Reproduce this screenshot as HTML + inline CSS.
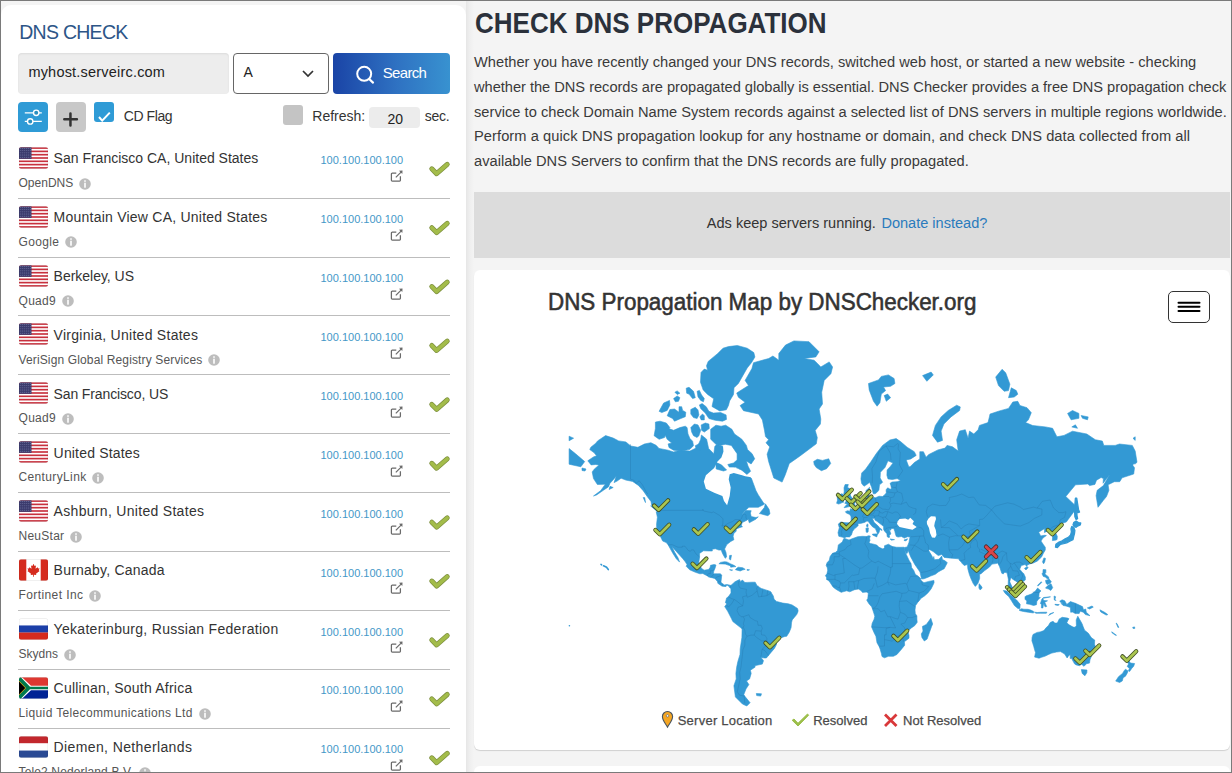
<!DOCTYPE html>
<html><head><meta charset="utf-8">
<style>
*{box-sizing:border-box;margin:0;padding:0}
html,body{width:1232px;height:773px;overflow:hidden;background:#f4f4f4;font-family:"Liberation Sans",sans-serif}
#frame{position:absolute;left:0;top:0;width:1232px;height:773px;border:1px solid #7a7a7a;pointer-events:none;z-index:50}
.abs{position:absolute}
#left{position:absolute;left:1px;top:5px;width:465px;height:780px;background:#fff;border-radius:10px 10px 0 0}
#track{position:absolute;left:466px;top:1px;width:8px;height:772px;background:linear-gradient(90deg,#e6e6e6,#eeeeee 40%,#f4f4f4)}
.t{position:absolute;white-space:nowrap;line-height:1}
</style></head><body>
<div id="frame"></div>
<div id="left"></div>
<div id="track"></div>

<!-- left panel content -->
<div class="t" style="left:19.2px;top:23.2px;font-size:19.5px;letter-spacing:-0.72px;color:#2d5587">DNS CHECK</div>
<div class="abs" style="left:18px;top:53px;width:211px;height:41px;background:#ededed;border-radius:4px;box-shadow:inset 0 1px 2px rgba(0,0,0,.08)"></div>
<div class="t" style="left:28.4px;top:64.5px;font-size:14.5px;letter-spacing:0.2px;color:#222">myhost.serveirc.com</div>
<div class="abs" style="left:233px;top:53px;width:96px;height:41px;border:1px solid #666;border-radius:4px;background:#fff"></div>
<div class="t" style="left:243.5px;top:65.2px;font-size:14px;color:#222">A</div>
<svg class="abs" style="left:301px;top:68px" width="14" height="10" viewBox="0 0 14 10"><path d="M2 3 L7 8 L12 3" fill="none" stroke="#333" stroke-width="1.7"/></svg>
<div class="abs" style="left:333px;top:53px;width:117px;height:41px;border-radius:4px;background:linear-gradient(90deg,#1a44a6,#2f72c2 55%,#3892d0)"></div>
<svg class="abs" style="left:354px;top:63px" width="22" height="22" viewBox="0 0 22 22"><circle cx="10.2" cy="10.8" r="7" fill="none" stroke="#fff" stroke-width="2"/><path d="M15.2 16 L19 19.6" stroke="#fff" stroke-width="2.2" stroke-linecap="round"/></svg>
<div class="t" style="left:382.8px;top:64.6px;font-size:15px;letter-spacing:-0.7px;color:#fff">Search</div>

<div class="abs" style="left:18px;top:102px;width:30px;height:30px;background:#2f9bd6;border-radius:4px"></div>
<svg class="abs" style="left:18px;top:102px" width="30" height="30" viewBox="0 0 30 30"><path d="M6.8 10.8H23.8M6.8 19.4H23.8" stroke="#fff" stroke-width="1.3"/><circle cx="18.2" cy="10.8" r="2.7" fill="#2a8fc0" stroke="#fff" stroke-width="1.4"/><circle cx="12.2" cy="19.4" r="2.7" fill="#2a8fc0" stroke="#fff" stroke-width="1.4"/></svg>
<div class="abs" style="left:56px;top:102px;width:30px;height:30px;background:#c8c8c8;border-radius:4px"></div>
<svg class="abs" style="left:56px;top:102px" width="30" height="30" viewBox="0 0 30 30"><path d="M14.45 11.4V23.5M8.3 17.3H20.9" stroke="#333" stroke-width="2.5" stroke-linecap="round"/></svg>
<div class="abs" style="left:94px;top:102px;width:20px;height:20px;background:#2f9bd6;border-radius:3px"></div>
<svg class="abs" style="left:94px;top:102px" width="20" height="20" viewBox="0 0 20 20"><path d="M5 15 L8.2 18.6 L15.8 10.6" fill="none" stroke="#fff" stroke-width="2"/></svg>
<div class="t" style="left:123.7px;top:108.8px;font-size:14px;letter-spacing:-0.4px;color:#333">CD Flag</div>
<div class="abs" style="left:283px;top:105px;width:20px;height:20px;background:#c4c4c4;border-radius:3px"></div>
<div class="t" style="left:312.3px;top:109.2px;font-size:14px;color:#333">Refresh:</div>
<div class="abs" style="left:369.2px;top:106.5px;width:50.5px;height:21px;background:#ececec;border-radius:4px"></div>
<div class="t" style="left:387.5px;top:111.5px;font-size:14px;color:#222">20</div>
<div class="t" style="left:424.8px;top:109.2px;font-size:14px;letter-spacing:-0.3px;color:#333">sec.</div>

<svg class="abs" style="left:18.5px;top:146.5px" width="29" height="22" viewBox="0 0 29 21.5"><defs><clipPath id="fc146"><rect width="29" height="21.5" rx="2"/></clipPath></defs><g clip-path="url(#fc146)"><rect width="29" height="21.5" fill="#fff"/><rect y="0.00" width="29" height="1.65" fill="#c8313e"/><rect y="3.31" width="29" height="1.65" fill="#c8313e"/><rect y="6.62" width="29" height="1.65" fill="#c8313e"/><rect y="9.92" width="29" height="1.65" fill="#c8313e"/><rect y="13.23" width="29" height="1.65" fill="#c8313e"/><rect y="16.54" width="29" height="1.65" fill="#c8313e"/><rect y="19.85" width="29" height="1.65" fill="#c8313e"/><rect width="12.5" height="11.6" fill="#3b3b6d"/><circle cx="1.2" cy="1.2" r="0.45" fill="#9aa0c8"/><circle cx="3.2" cy="1.2" r="0.45" fill="#9aa0c8"/><circle cx="5.2" cy="1.2" r="0.45" fill="#9aa0c8"/><circle cx="7.2" cy="1.2" r="0.45" fill="#9aa0c8"/><circle cx="9.2" cy="1.2" r="0.45" fill="#9aa0c8"/><circle cx="11.2" cy="1.2" r="0.45" fill="#9aa0c8"/><circle cx="1.2" cy="3.4" r="0.45" fill="#9aa0c8"/><circle cx="3.2" cy="3.4" r="0.45" fill="#9aa0c8"/><circle cx="5.2" cy="3.4" r="0.45" fill="#9aa0c8"/><circle cx="7.2" cy="3.4" r="0.45" fill="#9aa0c8"/><circle cx="9.2" cy="3.4" r="0.45" fill="#9aa0c8"/><circle cx="11.2" cy="3.4" r="0.45" fill="#9aa0c8"/><circle cx="1.2" cy="5.6" r="0.45" fill="#9aa0c8"/><circle cx="3.2" cy="5.6" r="0.45" fill="#9aa0c8"/><circle cx="5.2" cy="5.6" r="0.45" fill="#9aa0c8"/><circle cx="7.2" cy="5.6" r="0.45" fill="#9aa0c8"/><circle cx="9.2" cy="5.6" r="0.45" fill="#9aa0c8"/><circle cx="11.2" cy="5.6" r="0.45" fill="#9aa0c8"/><circle cx="1.2" cy="7.8" r="0.45" fill="#9aa0c8"/><circle cx="3.2" cy="7.8" r="0.45" fill="#9aa0c8"/><circle cx="5.2" cy="7.8" r="0.45" fill="#9aa0c8"/><circle cx="7.2" cy="7.8" r="0.45" fill="#9aa0c8"/><circle cx="9.2" cy="7.8" r="0.45" fill="#9aa0c8"/><circle cx="11.2" cy="7.8" r="0.45" fill="#9aa0c8"/><circle cx="1.2" cy="10.0" r="0.45" fill="#9aa0c8"/><circle cx="3.2" cy="10.0" r="0.45" fill="#9aa0c8"/><circle cx="5.2" cy="10.0" r="0.45" fill="#9aa0c8"/><circle cx="7.2" cy="10.0" r="0.45" fill="#9aa0c8"/><circle cx="9.2" cy="10.0" r="0.45" fill="#9aa0c8"/><circle cx="11.2" cy="10.0" r="0.45" fill="#9aa0c8"/></g><rect x="0.25" y="0.25" width="28.5" height="21" rx="2" fill="none" stroke="rgba(0,0,0,0.12)" stroke-width="0.5"/></svg><div class="t" style="left:53.6px;top:151.0px;font-size:14px;letter-spacing:0.002px;color:#333">San Francisco CA, United States</div><div class="t" style="left:18.5px;top:176.8px;font-size:12px;letter-spacing:0.014px;color:#555">OpenDNS</div><svg class="abs" style="left:78.8px;top:177.5px" width="12" height="12" viewBox="0 0 12 12"><circle cx="6" cy="6" r="5.8" fill="#bdbdbd"/><rect x="5.2" y="2.3" width="1.6" height="1.5" fill="#fff"/><rect x="5.2" y="4.7" width="1.6" height="5" fill="#fff"/></svg><div class="t" style="left:320.5px;top:155.3px;font-size:11px;color:#4598c8">100.100.100.100</div><svg class="abs" style="left:389.5px;top:170.0px" width="14" height="13" viewBox="0 0 14 13"><path d="M6.3 3.1 H2.3 Q1.4 3.1 1.4 4 V10.3 Q1.4 11.1 2.3 11.1 H9.6 Q10.4 11.1 10.4 10.3 V6.3" fill="none" stroke="#6a6a6a" stroke-width="1.25"/><path d="M5.8 7.4 L11.6 1.6" fill="none" stroke="#6a6a6a" stroke-width="1.2"/><path d="M9 0.7 L12.5 0.5 L12.3 4Z" fill="#6a6a6a"/></svg><svg class="abs" style="left:0;top:0;overflow:visible" width="1" height="1"><path d="M431.8 168.8 L436.6 173.7 L447.2 164.4" fill="none" stroke="#7d8f3f" stroke-width="5" stroke-linejoin="round" stroke-linecap="round"/><path d="M431.8 168.8 L436.6 173.7 L447.2 164.4" fill="none" stroke="#a3bc4a" stroke-width="3.6" stroke-linejoin="round" stroke-linecap="round"/></svg><div class="abs" style="left:18px;top:198px;width:432px;height:1px;background:#bdbdbd"></div><svg class="abs" style="left:18.5px;top:205.5px" width="29" height="22" viewBox="0 0 29 21.5"><defs><clipPath id="fc205"><rect width="29" height="21.5" rx="2"/></clipPath></defs><g clip-path="url(#fc205)"><rect width="29" height="21.5" fill="#fff"/><rect y="0.00" width="29" height="1.65" fill="#c8313e"/><rect y="3.31" width="29" height="1.65" fill="#c8313e"/><rect y="6.62" width="29" height="1.65" fill="#c8313e"/><rect y="9.92" width="29" height="1.65" fill="#c8313e"/><rect y="13.23" width="29" height="1.65" fill="#c8313e"/><rect y="16.54" width="29" height="1.65" fill="#c8313e"/><rect y="19.85" width="29" height="1.65" fill="#c8313e"/><rect width="12.5" height="11.6" fill="#3b3b6d"/><circle cx="1.2" cy="1.2" r="0.45" fill="#9aa0c8"/><circle cx="3.2" cy="1.2" r="0.45" fill="#9aa0c8"/><circle cx="5.2" cy="1.2" r="0.45" fill="#9aa0c8"/><circle cx="7.2" cy="1.2" r="0.45" fill="#9aa0c8"/><circle cx="9.2" cy="1.2" r="0.45" fill="#9aa0c8"/><circle cx="11.2" cy="1.2" r="0.45" fill="#9aa0c8"/><circle cx="1.2" cy="3.4" r="0.45" fill="#9aa0c8"/><circle cx="3.2" cy="3.4" r="0.45" fill="#9aa0c8"/><circle cx="5.2" cy="3.4" r="0.45" fill="#9aa0c8"/><circle cx="7.2" cy="3.4" r="0.45" fill="#9aa0c8"/><circle cx="9.2" cy="3.4" r="0.45" fill="#9aa0c8"/><circle cx="11.2" cy="3.4" r="0.45" fill="#9aa0c8"/><circle cx="1.2" cy="5.6" r="0.45" fill="#9aa0c8"/><circle cx="3.2" cy="5.6" r="0.45" fill="#9aa0c8"/><circle cx="5.2" cy="5.6" r="0.45" fill="#9aa0c8"/><circle cx="7.2" cy="5.6" r="0.45" fill="#9aa0c8"/><circle cx="9.2" cy="5.6" r="0.45" fill="#9aa0c8"/><circle cx="11.2" cy="5.6" r="0.45" fill="#9aa0c8"/><circle cx="1.2" cy="7.8" r="0.45" fill="#9aa0c8"/><circle cx="3.2" cy="7.8" r="0.45" fill="#9aa0c8"/><circle cx="5.2" cy="7.8" r="0.45" fill="#9aa0c8"/><circle cx="7.2" cy="7.8" r="0.45" fill="#9aa0c8"/><circle cx="9.2" cy="7.8" r="0.45" fill="#9aa0c8"/><circle cx="11.2" cy="7.8" r="0.45" fill="#9aa0c8"/><circle cx="1.2" cy="10.0" r="0.45" fill="#9aa0c8"/><circle cx="3.2" cy="10.0" r="0.45" fill="#9aa0c8"/><circle cx="5.2" cy="10.0" r="0.45" fill="#9aa0c8"/><circle cx="7.2" cy="10.0" r="0.45" fill="#9aa0c8"/><circle cx="9.2" cy="10.0" r="0.45" fill="#9aa0c8"/><circle cx="11.2" cy="10.0" r="0.45" fill="#9aa0c8"/></g><rect x="0.25" y="0.25" width="28.5" height="21" rx="2" fill="none" stroke="rgba(0,0,0,0.12)" stroke-width="0.5"/></svg><div class="t" style="left:53.6px;top:209.9px;font-size:14px;letter-spacing:0.234px;color:#333">Mountain View CA, United States</div><div class="t" style="left:18.5px;top:235.7px;font-size:12px;letter-spacing:0.367px;color:#555">Google</div><svg class="abs" style="left:64.9px;top:236.4px" width="12" height="12" viewBox="0 0 12 12"><circle cx="6" cy="6" r="5.8" fill="#bdbdbd"/><rect x="5.2" y="2.3" width="1.6" height="1.5" fill="#fff"/><rect x="5.2" y="4.7" width="1.6" height="5" fill="#fff"/></svg><div class="t" style="left:320.5px;top:214.2px;font-size:11px;color:#4598c8">100.100.100.100</div><svg class="abs" style="left:389.5px;top:228.9px" width="14" height="13" viewBox="0 0 14 13"><path d="M6.3 3.1 H2.3 Q1.4 3.1 1.4 4 V10.3 Q1.4 11.1 2.3 11.1 H9.6 Q10.4 11.1 10.4 10.3 V6.3" fill="none" stroke="#6a6a6a" stroke-width="1.25"/><path d="M5.8 7.4 L11.6 1.6" fill="none" stroke="#6a6a6a" stroke-width="1.2"/><path d="M9 0.7 L12.5 0.5 L12.3 4Z" fill="#6a6a6a"/></svg><svg class="abs" style="left:0;top:0;overflow:visible" width="1" height="1"><path d="M431.8 227.7 L436.6 232.6 L447.2 223.3" fill="none" stroke="#7d8f3f" stroke-width="5" stroke-linejoin="round" stroke-linecap="round"/><path d="M431.8 227.7 L436.6 232.6 L447.2 223.3" fill="none" stroke="#a3bc4a" stroke-width="3.6" stroke-linejoin="round" stroke-linecap="round"/></svg><div class="abs" style="left:18px;top:257px;width:432px;height:1px;background:#bdbdbd"></div><svg class="abs" style="left:18.5px;top:264.5px" width="29" height="22" viewBox="0 0 29 21.5"><defs><clipPath id="fc264"><rect width="29" height="21.5" rx="2"/></clipPath></defs><g clip-path="url(#fc264)"><rect width="29" height="21.5" fill="#fff"/><rect y="0.00" width="29" height="1.65" fill="#c8313e"/><rect y="3.31" width="29" height="1.65" fill="#c8313e"/><rect y="6.62" width="29" height="1.65" fill="#c8313e"/><rect y="9.92" width="29" height="1.65" fill="#c8313e"/><rect y="13.23" width="29" height="1.65" fill="#c8313e"/><rect y="16.54" width="29" height="1.65" fill="#c8313e"/><rect y="19.85" width="29" height="1.65" fill="#c8313e"/><rect width="12.5" height="11.6" fill="#3b3b6d"/><circle cx="1.2" cy="1.2" r="0.45" fill="#9aa0c8"/><circle cx="3.2" cy="1.2" r="0.45" fill="#9aa0c8"/><circle cx="5.2" cy="1.2" r="0.45" fill="#9aa0c8"/><circle cx="7.2" cy="1.2" r="0.45" fill="#9aa0c8"/><circle cx="9.2" cy="1.2" r="0.45" fill="#9aa0c8"/><circle cx="11.2" cy="1.2" r="0.45" fill="#9aa0c8"/><circle cx="1.2" cy="3.4" r="0.45" fill="#9aa0c8"/><circle cx="3.2" cy="3.4" r="0.45" fill="#9aa0c8"/><circle cx="5.2" cy="3.4" r="0.45" fill="#9aa0c8"/><circle cx="7.2" cy="3.4" r="0.45" fill="#9aa0c8"/><circle cx="9.2" cy="3.4" r="0.45" fill="#9aa0c8"/><circle cx="11.2" cy="3.4" r="0.45" fill="#9aa0c8"/><circle cx="1.2" cy="5.6" r="0.45" fill="#9aa0c8"/><circle cx="3.2" cy="5.6" r="0.45" fill="#9aa0c8"/><circle cx="5.2" cy="5.6" r="0.45" fill="#9aa0c8"/><circle cx="7.2" cy="5.6" r="0.45" fill="#9aa0c8"/><circle cx="9.2" cy="5.6" r="0.45" fill="#9aa0c8"/><circle cx="11.2" cy="5.6" r="0.45" fill="#9aa0c8"/><circle cx="1.2" cy="7.8" r="0.45" fill="#9aa0c8"/><circle cx="3.2" cy="7.8" r="0.45" fill="#9aa0c8"/><circle cx="5.2" cy="7.8" r="0.45" fill="#9aa0c8"/><circle cx="7.2" cy="7.8" r="0.45" fill="#9aa0c8"/><circle cx="9.2" cy="7.8" r="0.45" fill="#9aa0c8"/><circle cx="11.2" cy="7.8" r="0.45" fill="#9aa0c8"/><circle cx="1.2" cy="10.0" r="0.45" fill="#9aa0c8"/><circle cx="3.2" cy="10.0" r="0.45" fill="#9aa0c8"/><circle cx="5.2" cy="10.0" r="0.45" fill="#9aa0c8"/><circle cx="7.2" cy="10.0" r="0.45" fill="#9aa0c8"/><circle cx="9.2" cy="10.0" r="0.45" fill="#9aa0c8"/><circle cx="11.2" cy="10.0" r="0.45" fill="#9aa0c8"/></g><rect x="0.25" y="0.25" width="28.5" height="21" rx="2" fill="none" stroke="rgba(0,0,0,0.12)" stroke-width="0.5"/></svg><div class="t" style="left:53.6px;top:268.8px;font-size:14px;letter-spacing:-0.022px;color:#333">Berkeley, US</div><div class="t" style="left:18.5px;top:294.6px;font-size:12px;letter-spacing:0.300px;color:#555">Quad9</div><svg class="abs" style="left:61.5px;top:295.3px" width="12" height="12" viewBox="0 0 12 12"><circle cx="6" cy="6" r="5.8" fill="#bdbdbd"/><rect x="5.2" y="2.3" width="1.6" height="1.5" fill="#fff"/><rect x="5.2" y="4.7" width="1.6" height="5" fill="#fff"/></svg><div class="t" style="left:320.5px;top:273.1px;font-size:11px;color:#4598c8">100.100.100.100</div><svg class="abs" style="left:389.5px;top:287.8px" width="14" height="13" viewBox="0 0 14 13"><path d="M6.3 3.1 H2.3 Q1.4 3.1 1.4 4 V10.3 Q1.4 11.1 2.3 11.1 H9.6 Q10.4 11.1 10.4 10.3 V6.3" fill="none" stroke="#6a6a6a" stroke-width="1.25"/><path d="M5.8 7.4 L11.6 1.6" fill="none" stroke="#6a6a6a" stroke-width="1.2"/><path d="M9 0.7 L12.5 0.5 L12.3 4Z" fill="#6a6a6a"/></svg><svg class="abs" style="left:0;top:0;overflow:visible" width="1" height="1"><path d="M431.8 286.6 L436.6 291.5 L447.2 282.2" fill="none" stroke="#7d8f3f" stroke-width="5" stroke-linejoin="round" stroke-linecap="round"/><path d="M431.8 286.6 L436.6 291.5 L447.2 282.2" fill="none" stroke="#a3bc4a" stroke-width="3.6" stroke-linejoin="round" stroke-linecap="round"/></svg><div class="abs" style="left:18px;top:315px;width:432px;height:1px;background:#bdbdbd"></div><svg class="abs" style="left:18.5px;top:323.0px" width="29" height="22" viewBox="0 0 29 21.5"><defs><clipPath id="fc323"><rect width="29" height="21.5" rx="2"/></clipPath></defs><g clip-path="url(#fc323)"><rect width="29" height="21.5" fill="#fff"/><rect y="0.00" width="29" height="1.65" fill="#c8313e"/><rect y="3.31" width="29" height="1.65" fill="#c8313e"/><rect y="6.62" width="29" height="1.65" fill="#c8313e"/><rect y="9.92" width="29" height="1.65" fill="#c8313e"/><rect y="13.23" width="29" height="1.65" fill="#c8313e"/><rect y="16.54" width="29" height="1.65" fill="#c8313e"/><rect y="19.85" width="29" height="1.65" fill="#c8313e"/><rect width="12.5" height="11.6" fill="#3b3b6d"/><circle cx="1.2" cy="1.2" r="0.45" fill="#9aa0c8"/><circle cx="3.2" cy="1.2" r="0.45" fill="#9aa0c8"/><circle cx="5.2" cy="1.2" r="0.45" fill="#9aa0c8"/><circle cx="7.2" cy="1.2" r="0.45" fill="#9aa0c8"/><circle cx="9.2" cy="1.2" r="0.45" fill="#9aa0c8"/><circle cx="11.2" cy="1.2" r="0.45" fill="#9aa0c8"/><circle cx="1.2" cy="3.4" r="0.45" fill="#9aa0c8"/><circle cx="3.2" cy="3.4" r="0.45" fill="#9aa0c8"/><circle cx="5.2" cy="3.4" r="0.45" fill="#9aa0c8"/><circle cx="7.2" cy="3.4" r="0.45" fill="#9aa0c8"/><circle cx="9.2" cy="3.4" r="0.45" fill="#9aa0c8"/><circle cx="11.2" cy="3.4" r="0.45" fill="#9aa0c8"/><circle cx="1.2" cy="5.6" r="0.45" fill="#9aa0c8"/><circle cx="3.2" cy="5.6" r="0.45" fill="#9aa0c8"/><circle cx="5.2" cy="5.6" r="0.45" fill="#9aa0c8"/><circle cx="7.2" cy="5.6" r="0.45" fill="#9aa0c8"/><circle cx="9.2" cy="5.6" r="0.45" fill="#9aa0c8"/><circle cx="11.2" cy="5.6" r="0.45" fill="#9aa0c8"/><circle cx="1.2" cy="7.8" r="0.45" fill="#9aa0c8"/><circle cx="3.2" cy="7.8" r="0.45" fill="#9aa0c8"/><circle cx="5.2" cy="7.8" r="0.45" fill="#9aa0c8"/><circle cx="7.2" cy="7.8" r="0.45" fill="#9aa0c8"/><circle cx="9.2" cy="7.8" r="0.45" fill="#9aa0c8"/><circle cx="11.2" cy="7.8" r="0.45" fill="#9aa0c8"/><circle cx="1.2" cy="10.0" r="0.45" fill="#9aa0c8"/><circle cx="3.2" cy="10.0" r="0.45" fill="#9aa0c8"/><circle cx="5.2" cy="10.0" r="0.45" fill="#9aa0c8"/><circle cx="7.2" cy="10.0" r="0.45" fill="#9aa0c8"/><circle cx="9.2" cy="10.0" r="0.45" fill="#9aa0c8"/><circle cx="11.2" cy="10.0" r="0.45" fill="#9aa0c8"/></g><rect x="0.25" y="0.25" width="28.5" height="21" rx="2" fill="none" stroke="rgba(0,0,0,0.12)" stroke-width="0.5"/></svg><div class="t" style="left:53.6px;top:327.7px;font-size:14px;letter-spacing:0.276px;color:#333">Virginia, United States</div><div class="t" style="left:18.5px;top:353.5px;font-size:12px;letter-spacing:0.136px;color:#555">VeriSign Global Registry Services</div><svg class="abs" style="left:207.9px;top:354.2px" width="12" height="12" viewBox="0 0 12 12"><circle cx="6" cy="6" r="5.8" fill="#bdbdbd"/><rect x="5.2" y="2.3" width="1.6" height="1.5" fill="#fff"/><rect x="5.2" y="4.7" width="1.6" height="5" fill="#fff"/></svg><div class="t" style="left:320.5px;top:332.0px;font-size:11px;color:#4598c8">100.100.100.100</div><svg class="abs" style="left:389.5px;top:346.7px" width="14" height="13" viewBox="0 0 14 13"><path d="M6.3 3.1 H2.3 Q1.4 3.1 1.4 4 V10.3 Q1.4 11.1 2.3 11.1 H9.6 Q10.4 11.1 10.4 10.3 V6.3" fill="none" stroke="#6a6a6a" stroke-width="1.25"/><path d="M5.8 7.4 L11.6 1.6" fill="none" stroke="#6a6a6a" stroke-width="1.2"/><path d="M9 0.7 L12.5 0.5 L12.3 4Z" fill="#6a6a6a"/></svg><svg class="abs" style="left:0;top:0;overflow:visible" width="1" height="1"><path d="M431.8 345.5 L436.6 350.4 L447.2 341.1" fill="none" stroke="#7d8f3f" stroke-width="5" stroke-linejoin="round" stroke-linecap="round"/><path d="M431.8 345.5 L436.6 350.4 L447.2 341.1" fill="none" stroke="#a3bc4a" stroke-width="3.6" stroke-linejoin="round" stroke-linecap="round"/></svg><div class="abs" style="left:18px;top:374px;width:432px;height:1px;background:#bdbdbd"></div><svg class="abs" style="left:18.5px;top:382.0px" width="29" height="22" viewBox="0 0 29 21.5"><defs><clipPath id="fc382"><rect width="29" height="21.5" rx="2"/></clipPath></defs><g clip-path="url(#fc382)"><rect width="29" height="21.5" fill="#fff"/><rect y="0.00" width="29" height="1.65" fill="#c8313e"/><rect y="3.31" width="29" height="1.65" fill="#c8313e"/><rect y="6.62" width="29" height="1.65" fill="#c8313e"/><rect y="9.92" width="29" height="1.65" fill="#c8313e"/><rect y="13.23" width="29" height="1.65" fill="#c8313e"/><rect y="16.54" width="29" height="1.65" fill="#c8313e"/><rect y="19.85" width="29" height="1.65" fill="#c8313e"/><rect width="12.5" height="11.6" fill="#3b3b6d"/><circle cx="1.2" cy="1.2" r="0.45" fill="#9aa0c8"/><circle cx="3.2" cy="1.2" r="0.45" fill="#9aa0c8"/><circle cx="5.2" cy="1.2" r="0.45" fill="#9aa0c8"/><circle cx="7.2" cy="1.2" r="0.45" fill="#9aa0c8"/><circle cx="9.2" cy="1.2" r="0.45" fill="#9aa0c8"/><circle cx="11.2" cy="1.2" r="0.45" fill="#9aa0c8"/><circle cx="1.2" cy="3.4" r="0.45" fill="#9aa0c8"/><circle cx="3.2" cy="3.4" r="0.45" fill="#9aa0c8"/><circle cx="5.2" cy="3.4" r="0.45" fill="#9aa0c8"/><circle cx="7.2" cy="3.4" r="0.45" fill="#9aa0c8"/><circle cx="9.2" cy="3.4" r="0.45" fill="#9aa0c8"/><circle cx="11.2" cy="3.4" r="0.45" fill="#9aa0c8"/><circle cx="1.2" cy="5.6" r="0.45" fill="#9aa0c8"/><circle cx="3.2" cy="5.6" r="0.45" fill="#9aa0c8"/><circle cx="5.2" cy="5.6" r="0.45" fill="#9aa0c8"/><circle cx="7.2" cy="5.6" r="0.45" fill="#9aa0c8"/><circle cx="9.2" cy="5.6" r="0.45" fill="#9aa0c8"/><circle cx="11.2" cy="5.6" r="0.45" fill="#9aa0c8"/><circle cx="1.2" cy="7.8" r="0.45" fill="#9aa0c8"/><circle cx="3.2" cy="7.8" r="0.45" fill="#9aa0c8"/><circle cx="5.2" cy="7.8" r="0.45" fill="#9aa0c8"/><circle cx="7.2" cy="7.8" r="0.45" fill="#9aa0c8"/><circle cx="9.2" cy="7.8" r="0.45" fill="#9aa0c8"/><circle cx="11.2" cy="7.8" r="0.45" fill="#9aa0c8"/><circle cx="1.2" cy="10.0" r="0.45" fill="#9aa0c8"/><circle cx="3.2" cy="10.0" r="0.45" fill="#9aa0c8"/><circle cx="5.2" cy="10.0" r="0.45" fill="#9aa0c8"/><circle cx="7.2" cy="10.0" r="0.45" fill="#9aa0c8"/><circle cx="9.2" cy="10.0" r="0.45" fill="#9aa0c8"/><circle cx="11.2" cy="10.0" r="0.45" fill="#9aa0c8"/></g><rect x="0.25" y="0.25" width="28.5" height="21" rx="2" fill="none" stroke="rgba(0,0,0,0.12)" stroke-width="0.5"/></svg><div class="t" style="left:53.6px;top:386.6px;font-size:14px;letter-spacing:-0.130px;color:#333">San Francisco, US</div><div class="t" style="left:18.5px;top:412.4px;font-size:12px;letter-spacing:0.300px;color:#555">Quad9</div><svg class="abs" style="left:61.5px;top:413.1px" width="12" height="12" viewBox="0 0 12 12"><circle cx="6" cy="6" r="5.8" fill="#bdbdbd"/><rect x="5.2" y="2.3" width="1.6" height="1.5" fill="#fff"/><rect x="5.2" y="4.7" width="1.6" height="5" fill="#fff"/></svg><div class="t" style="left:320.5px;top:390.9px;font-size:11px;color:#4598c8">100.100.100.100</div><svg class="abs" style="left:389.5px;top:405.6px" width="14" height="13" viewBox="0 0 14 13"><path d="M6.3 3.1 H2.3 Q1.4 3.1 1.4 4 V10.3 Q1.4 11.1 2.3 11.1 H9.6 Q10.4 11.1 10.4 10.3 V6.3" fill="none" stroke="#6a6a6a" stroke-width="1.25"/><path d="M5.8 7.4 L11.6 1.6" fill="none" stroke="#6a6a6a" stroke-width="1.2"/><path d="M9 0.7 L12.5 0.5 L12.3 4Z" fill="#6a6a6a"/></svg><svg class="abs" style="left:0;top:0;overflow:visible" width="1" height="1"><path d="M431.8 404.4 L436.6 409.3 L447.2 400.0" fill="none" stroke="#7d8f3f" stroke-width="5" stroke-linejoin="round" stroke-linecap="round"/><path d="M431.8 404.4 L436.6 409.3 L447.2 400.0" fill="none" stroke="#a3bc4a" stroke-width="3.6" stroke-linejoin="round" stroke-linecap="round"/></svg><div class="abs" style="left:18px;top:433px;width:432px;height:1px;background:#bdbdbd"></div><svg class="abs" style="left:18.5px;top:441.0px" width="29" height="22" viewBox="0 0 29 21.5"><defs><clipPath id="fc441"><rect width="29" height="21.5" rx="2"/></clipPath></defs><g clip-path="url(#fc441)"><rect width="29" height="21.5" fill="#fff"/><rect y="0.00" width="29" height="1.65" fill="#c8313e"/><rect y="3.31" width="29" height="1.65" fill="#c8313e"/><rect y="6.62" width="29" height="1.65" fill="#c8313e"/><rect y="9.92" width="29" height="1.65" fill="#c8313e"/><rect y="13.23" width="29" height="1.65" fill="#c8313e"/><rect y="16.54" width="29" height="1.65" fill="#c8313e"/><rect y="19.85" width="29" height="1.65" fill="#c8313e"/><rect width="12.5" height="11.6" fill="#3b3b6d"/><circle cx="1.2" cy="1.2" r="0.45" fill="#9aa0c8"/><circle cx="3.2" cy="1.2" r="0.45" fill="#9aa0c8"/><circle cx="5.2" cy="1.2" r="0.45" fill="#9aa0c8"/><circle cx="7.2" cy="1.2" r="0.45" fill="#9aa0c8"/><circle cx="9.2" cy="1.2" r="0.45" fill="#9aa0c8"/><circle cx="11.2" cy="1.2" r="0.45" fill="#9aa0c8"/><circle cx="1.2" cy="3.4" r="0.45" fill="#9aa0c8"/><circle cx="3.2" cy="3.4" r="0.45" fill="#9aa0c8"/><circle cx="5.2" cy="3.4" r="0.45" fill="#9aa0c8"/><circle cx="7.2" cy="3.4" r="0.45" fill="#9aa0c8"/><circle cx="9.2" cy="3.4" r="0.45" fill="#9aa0c8"/><circle cx="11.2" cy="3.4" r="0.45" fill="#9aa0c8"/><circle cx="1.2" cy="5.6" r="0.45" fill="#9aa0c8"/><circle cx="3.2" cy="5.6" r="0.45" fill="#9aa0c8"/><circle cx="5.2" cy="5.6" r="0.45" fill="#9aa0c8"/><circle cx="7.2" cy="5.6" r="0.45" fill="#9aa0c8"/><circle cx="9.2" cy="5.6" r="0.45" fill="#9aa0c8"/><circle cx="11.2" cy="5.6" r="0.45" fill="#9aa0c8"/><circle cx="1.2" cy="7.8" r="0.45" fill="#9aa0c8"/><circle cx="3.2" cy="7.8" r="0.45" fill="#9aa0c8"/><circle cx="5.2" cy="7.8" r="0.45" fill="#9aa0c8"/><circle cx="7.2" cy="7.8" r="0.45" fill="#9aa0c8"/><circle cx="9.2" cy="7.8" r="0.45" fill="#9aa0c8"/><circle cx="11.2" cy="7.8" r="0.45" fill="#9aa0c8"/><circle cx="1.2" cy="10.0" r="0.45" fill="#9aa0c8"/><circle cx="3.2" cy="10.0" r="0.45" fill="#9aa0c8"/><circle cx="5.2" cy="10.0" r="0.45" fill="#9aa0c8"/><circle cx="7.2" cy="10.0" r="0.45" fill="#9aa0c8"/><circle cx="9.2" cy="10.0" r="0.45" fill="#9aa0c8"/><circle cx="11.2" cy="10.0" r="0.45" fill="#9aa0c8"/></g><rect x="0.25" y="0.25" width="28.5" height="21" rx="2" fill="none" stroke="rgba(0,0,0,0.12)" stroke-width="0.5"/></svg><div class="t" style="left:53.6px;top:445.5px;font-size:14px;letter-spacing:0.173px;color:#333">United States</div><div class="t" style="left:18.5px;top:471.3px;font-size:12px;letter-spacing:0.364px;color:#555">CenturyLink</div><svg class="abs" style="left:92.0px;top:472.0px" width="12" height="12" viewBox="0 0 12 12"><circle cx="6" cy="6" r="5.8" fill="#bdbdbd"/><rect x="5.2" y="2.3" width="1.6" height="1.5" fill="#fff"/><rect x="5.2" y="4.7" width="1.6" height="5" fill="#fff"/></svg><div class="t" style="left:320.5px;top:449.8px;font-size:11px;color:#4598c8">100.100.100.100</div><svg class="abs" style="left:389.5px;top:464.5px" width="14" height="13" viewBox="0 0 14 13"><path d="M6.3 3.1 H2.3 Q1.4 3.1 1.4 4 V10.3 Q1.4 11.1 2.3 11.1 H9.6 Q10.4 11.1 10.4 10.3 V6.3" fill="none" stroke="#6a6a6a" stroke-width="1.25"/><path d="M5.8 7.4 L11.6 1.6" fill="none" stroke="#6a6a6a" stroke-width="1.2"/><path d="M9 0.7 L12.5 0.5 L12.3 4Z" fill="#6a6a6a"/></svg><svg class="abs" style="left:0;top:0;overflow:visible" width="1" height="1"><path d="M431.8 463.3 L436.6 468.2 L447.2 458.9" fill="none" stroke="#7d8f3f" stroke-width="5" stroke-linejoin="round" stroke-linecap="round"/><path d="M431.8 463.3 L436.6 468.2 L447.2 458.9" fill="none" stroke="#a3bc4a" stroke-width="3.6" stroke-linejoin="round" stroke-linecap="round"/></svg><div class="abs" style="left:18px;top:492px;width:432px;height:1px;background:#bdbdbd"></div><svg class="abs" style="left:18.5px;top:500.0px" width="29" height="22" viewBox="0 0 29 21.5"><defs><clipPath id="fc500"><rect width="29" height="21.5" rx="2"/></clipPath></defs><g clip-path="url(#fc500)"><rect width="29" height="21.5" fill="#fff"/><rect y="0.00" width="29" height="1.65" fill="#c8313e"/><rect y="3.31" width="29" height="1.65" fill="#c8313e"/><rect y="6.62" width="29" height="1.65" fill="#c8313e"/><rect y="9.92" width="29" height="1.65" fill="#c8313e"/><rect y="13.23" width="29" height="1.65" fill="#c8313e"/><rect y="16.54" width="29" height="1.65" fill="#c8313e"/><rect y="19.85" width="29" height="1.65" fill="#c8313e"/><rect width="12.5" height="11.6" fill="#3b3b6d"/><circle cx="1.2" cy="1.2" r="0.45" fill="#9aa0c8"/><circle cx="3.2" cy="1.2" r="0.45" fill="#9aa0c8"/><circle cx="5.2" cy="1.2" r="0.45" fill="#9aa0c8"/><circle cx="7.2" cy="1.2" r="0.45" fill="#9aa0c8"/><circle cx="9.2" cy="1.2" r="0.45" fill="#9aa0c8"/><circle cx="11.2" cy="1.2" r="0.45" fill="#9aa0c8"/><circle cx="1.2" cy="3.4" r="0.45" fill="#9aa0c8"/><circle cx="3.2" cy="3.4" r="0.45" fill="#9aa0c8"/><circle cx="5.2" cy="3.4" r="0.45" fill="#9aa0c8"/><circle cx="7.2" cy="3.4" r="0.45" fill="#9aa0c8"/><circle cx="9.2" cy="3.4" r="0.45" fill="#9aa0c8"/><circle cx="11.2" cy="3.4" r="0.45" fill="#9aa0c8"/><circle cx="1.2" cy="5.6" r="0.45" fill="#9aa0c8"/><circle cx="3.2" cy="5.6" r="0.45" fill="#9aa0c8"/><circle cx="5.2" cy="5.6" r="0.45" fill="#9aa0c8"/><circle cx="7.2" cy="5.6" r="0.45" fill="#9aa0c8"/><circle cx="9.2" cy="5.6" r="0.45" fill="#9aa0c8"/><circle cx="11.2" cy="5.6" r="0.45" fill="#9aa0c8"/><circle cx="1.2" cy="7.8" r="0.45" fill="#9aa0c8"/><circle cx="3.2" cy="7.8" r="0.45" fill="#9aa0c8"/><circle cx="5.2" cy="7.8" r="0.45" fill="#9aa0c8"/><circle cx="7.2" cy="7.8" r="0.45" fill="#9aa0c8"/><circle cx="9.2" cy="7.8" r="0.45" fill="#9aa0c8"/><circle cx="11.2" cy="7.8" r="0.45" fill="#9aa0c8"/><circle cx="1.2" cy="10.0" r="0.45" fill="#9aa0c8"/><circle cx="3.2" cy="10.0" r="0.45" fill="#9aa0c8"/><circle cx="5.2" cy="10.0" r="0.45" fill="#9aa0c8"/><circle cx="7.2" cy="10.0" r="0.45" fill="#9aa0c8"/><circle cx="9.2" cy="10.0" r="0.45" fill="#9aa0c8"/><circle cx="11.2" cy="10.0" r="0.45" fill="#9aa0c8"/></g><rect x="0.25" y="0.25" width="28.5" height="21" rx="2" fill="none" stroke="rgba(0,0,0,0.12)" stroke-width="0.5"/></svg><div class="t" style="left:53.6px;top:504.4px;font-size:14px;letter-spacing:0.306px;color:#333">Ashburn, United States</div><div class="t" style="left:18.5px;top:530.2px;font-size:12px;letter-spacing:0.257px;color:#555">NeuStar</div><svg class="abs" style="left:69.8px;top:530.9px" width="12" height="12" viewBox="0 0 12 12"><circle cx="6" cy="6" r="5.8" fill="#bdbdbd"/><rect x="5.2" y="2.3" width="1.6" height="1.5" fill="#fff"/><rect x="5.2" y="4.7" width="1.6" height="5" fill="#fff"/></svg><div class="t" style="left:320.5px;top:508.7px;font-size:11px;color:#4598c8">100.100.100.100</div><svg class="abs" style="left:389.5px;top:523.4px" width="14" height="13" viewBox="0 0 14 13"><path d="M6.3 3.1 H2.3 Q1.4 3.1 1.4 4 V10.3 Q1.4 11.1 2.3 11.1 H9.6 Q10.4 11.1 10.4 10.3 V6.3" fill="none" stroke="#6a6a6a" stroke-width="1.25"/><path d="M5.8 7.4 L11.6 1.6" fill="none" stroke="#6a6a6a" stroke-width="1.2"/><path d="M9 0.7 L12.5 0.5 L12.3 4Z" fill="#6a6a6a"/></svg><svg class="abs" style="left:0;top:0;overflow:visible" width="1" height="1"><path d="M431.8 522.2 L436.6 527.1 L447.2 517.8" fill="none" stroke="#7d8f3f" stroke-width="5" stroke-linejoin="round" stroke-linecap="round"/><path d="M431.8 522.2 L436.6 527.1 L447.2 517.8" fill="none" stroke="#a3bc4a" stroke-width="3.6" stroke-linejoin="round" stroke-linecap="round"/></svg><div class="abs" style="left:18px;top:551px;width:432px;height:1px;background:#bdbdbd"></div><svg class="abs" style="left:18.5px;top:559.0px" width="29" height="22" viewBox="0 0 29 21.5"><defs><clipPath id="fc559"><rect width="29" height="21.5" rx="2"/></clipPath></defs><g clip-path="url(#fc559)"><rect width="29" height="21.5" fill="#fff"/><rect width="7.3" height="21.5" fill="#d52b1e"/><rect x="21.7" width="7.3" height="21.5" fill="#d52b1e"/><path d="M14.5 4.5 L15.6 6.8 L17 6.2 L16.5 9.5 L18.6 8 L19.2 9.2 L20.5 9 L19.8 11.2 L20.6 11.8 L17 14.5 L17.3 15.8 L14.9 15.5 L14.9 17.5 L14.1 17.5 L14.1 15.5 L11.7 15.8 L12 14.5 L8.4 11.8 L9.2 11.2 L8.5 9 L9.8 9.2 L10.4 8 L12.5 9.5 L12 6.2 L13.4 6.8Z" fill="#d52b1e"/></g><rect x="0.25" y="0.25" width="28.5" height="21" rx="2" fill="none" stroke="rgba(0,0,0,0.12)" stroke-width="0.5"/></svg><div class="t" style="left:53.6px;top:563.3px;font-size:14px;letter-spacing:0.218px;color:#333">Burnaby, Canada</div><div class="t" style="left:18.5px;top:589.1px;font-size:12px;letter-spacing:0.408px;color:#555">Fortinet Inc</div><svg class="abs" style="left:88.9px;top:589.8px" width="12" height="12" viewBox="0 0 12 12"><circle cx="6" cy="6" r="5.8" fill="#bdbdbd"/><rect x="5.2" y="2.3" width="1.6" height="1.5" fill="#fff"/><rect x="5.2" y="4.7" width="1.6" height="5" fill="#fff"/></svg><div class="t" style="left:320.5px;top:567.6px;font-size:11px;color:#4598c8">100.100.100.100</div><svg class="abs" style="left:389.5px;top:582.3px" width="14" height="13" viewBox="0 0 14 13"><path d="M6.3 3.1 H2.3 Q1.4 3.1 1.4 4 V10.3 Q1.4 11.1 2.3 11.1 H9.6 Q10.4 11.1 10.4 10.3 V6.3" fill="none" stroke="#6a6a6a" stroke-width="1.25"/><path d="M5.8 7.4 L11.6 1.6" fill="none" stroke="#6a6a6a" stroke-width="1.2"/><path d="M9 0.7 L12.5 0.5 L12.3 4Z" fill="#6a6a6a"/></svg><svg class="abs" style="left:0;top:0;overflow:visible" width="1" height="1"><path d="M431.8 581.1 L436.6 586.0 L447.2 576.7" fill="none" stroke="#7d8f3f" stroke-width="5" stroke-linejoin="round" stroke-linecap="round"/><path d="M431.8 581.1 L436.6 586.0 L447.2 576.7" fill="none" stroke="#a3bc4a" stroke-width="3.6" stroke-linejoin="round" stroke-linecap="round"/></svg><div class="abs" style="left:18px;top:610px;width:432px;height:1px;background:#bdbdbd"></div><svg class="abs" style="left:18.5px;top:617.5px" width="29" height="22" viewBox="0 0 29 21.5"><defs><clipPath id="fc617"><rect width="29" height="21.5" rx="2"/></clipPath></defs><g clip-path="url(#fc617)"><rect width="29" height="7.2" fill="#fff"/><rect y="7.2" width="29" height="7.2" fill="#1c3fa8"/><rect y="14.3" width="29" height="7.2" fill="#d52b1e"/></g><rect x="0.25" y="0.25" width="28.5" height="21" rx="2" fill="none" stroke="rgba(0,0,0,0.12)" stroke-width="0.5"/></svg><div class="t" style="left:53.6px;top:622.2px;font-size:14px;letter-spacing:0.298px;color:#333">Yekaterinburg, Russian Federation</div><div class="t" style="left:18.5px;top:648.0px;font-size:12px;letter-spacing:0.017px;color:#555">Skydns</div><svg class="abs" style="left:63.5px;top:648.7px" width="12" height="12" viewBox="0 0 12 12"><circle cx="6" cy="6" r="5.8" fill="#bdbdbd"/><rect x="5.2" y="2.3" width="1.6" height="1.5" fill="#fff"/><rect x="5.2" y="4.7" width="1.6" height="5" fill="#fff"/></svg><div class="t" style="left:320.5px;top:626.5px;font-size:11px;color:#4598c8">100.100.100.100</div><svg class="abs" style="left:389.5px;top:641.2px" width="14" height="13" viewBox="0 0 14 13"><path d="M6.3 3.1 H2.3 Q1.4 3.1 1.4 4 V10.3 Q1.4 11.1 2.3 11.1 H9.6 Q10.4 11.1 10.4 10.3 V6.3" fill="none" stroke="#6a6a6a" stroke-width="1.25"/><path d="M5.8 7.4 L11.6 1.6" fill="none" stroke="#6a6a6a" stroke-width="1.2"/><path d="M9 0.7 L12.5 0.5 L12.3 4Z" fill="#6a6a6a"/></svg><svg class="abs" style="left:0;top:0;overflow:visible" width="1" height="1"><path d="M431.8 640.0 L436.6 644.9 L447.2 635.6" fill="none" stroke="#7d8f3f" stroke-width="5" stroke-linejoin="round" stroke-linecap="round"/><path d="M431.8 640.0 L436.6 644.9 L447.2 635.6" fill="none" stroke="#a3bc4a" stroke-width="3.6" stroke-linejoin="round" stroke-linecap="round"/></svg><div class="abs" style="left:18px;top:669px;width:432px;height:1px;background:#bdbdbd"></div><svg class="abs" style="left:18.5px;top:676.5px" width="29" height="22" viewBox="0 0 29 21.5"><defs><clipPath id="fc676"><rect width="29" height="21.5" rx="2"/></clipPath></defs><g clip-path="url(#fc676)"><rect width="29" height="10.75" fill="#de3831"/><rect y="10.75" width="29" height="10.75" fill="#002395"/><path d="M0 0 L10 10.75 L0 21.5Z" fill="#fff"/><path d="M0 2.2 L8.2 10.75 L0 19.3Z" fill="#ffb612"/><path d="M0 0 L3 0 L12 8.6 L29 8.6 L29 12.9 L12 12.9 L3 21.5 L0 21.5 L0 19.3 L8.2 10.75 L0 2.2Z" fill="#fff"/><path d="M0 0 L1.8 0 L11 9.6 L29 9.6 L29 11.9 L11 11.9 L1.8 21.5 L0 21.5 L0 18 L7 10.75 L0 3.5Z" fill="#007a4d"/><path d="M0 4.2 L6.3 10.75 L0 17.3Z" fill="#000"/></g><rect x="0.25" y="0.25" width="28.5" height="21" rx="2" fill="none" stroke="rgba(0,0,0,0.12)" stroke-width="0.5"/></svg><div class="t" style="left:53.6px;top:681.1px;font-size:14px;letter-spacing:0.226px;color:#333">Cullinan, South Africa</div><div class="t" style="left:18.5px;top:706.9px;font-size:12px;letter-spacing:0.359px;color:#555">Liquid Telecommunications Ltd</div><svg class="abs" style="left:198.5px;top:707.6px" width="12" height="12" viewBox="0 0 12 12"><circle cx="6" cy="6" r="5.8" fill="#bdbdbd"/><rect x="5.2" y="2.3" width="1.6" height="1.5" fill="#fff"/><rect x="5.2" y="4.7" width="1.6" height="5" fill="#fff"/></svg><div class="t" style="left:320.5px;top:685.4px;font-size:11px;color:#4598c8">100.100.100.100</div><svg class="abs" style="left:389.5px;top:700.1px" width="14" height="13" viewBox="0 0 14 13"><path d="M6.3 3.1 H2.3 Q1.4 3.1 1.4 4 V10.3 Q1.4 11.1 2.3 11.1 H9.6 Q10.4 11.1 10.4 10.3 V6.3" fill="none" stroke="#6a6a6a" stroke-width="1.25"/><path d="M5.8 7.4 L11.6 1.6" fill="none" stroke="#6a6a6a" stroke-width="1.2"/><path d="M9 0.7 L12.5 0.5 L12.3 4Z" fill="#6a6a6a"/></svg><svg class="abs" style="left:0;top:0;overflow:visible" width="1" height="1"><path d="M431.8 698.9 L436.6 703.8 L447.2 694.5" fill="none" stroke="#7d8f3f" stroke-width="5" stroke-linejoin="round" stroke-linecap="round"/><path d="M431.8 698.9 L436.6 703.8 L447.2 694.5" fill="none" stroke="#a3bc4a" stroke-width="3.6" stroke-linejoin="round" stroke-linecap="round"/></svg><div class="abs" style="left:18px;top:728px;width:432px;height:1px;background:#bdbdbd"></div><svg class="abs" style="left:18.5px;top:735.5px" width="29" height="22" viewBox="0 0 29 21.5"><defs><clipPath id="fc735"><rect width="29" height="21.5" rx="2"/></clipPath></defs><g clip-path="url(#fc735)"><rect width="29" height="7.2" fill="#c2272d"/><rect y="7.2" width="29" height="7.2" fill="#fff"/><rect y="14.3" width="29" height="7.2" fill="#2a4a94"/></g><rect x="0.25" y="0.25" width="28.5" height="21" rx="2" fill="none" stroke="rgba(0,0,0,0.12)" stroke-width="0.5"/></svg><div class="t" style="left:53.6px;top:740.0px;font-size:14px;letter-spacing:0.378px;color:#333">Diemen, Netherlands</div><div class="t" style="left:18.5px;top:765.8px;font-size:12px;letter-spacing:0.135px;color:#555">Tele2 Nederland B.V.</div><svg class="abs" style="left:139.0px;top:766.5px" width="12" height="12" viewBox="0 0 12 12"><circle cx="6" cy="6" r="5.8" fill="#bdbdbd"/><rect x="5.2" y="2.3" width="1.6" height="1.5" fill="#fff"/><rect x="5.2" y="4.7" width="1.6" height="5" fill="#fff"/></svg><div class="t" style="left:320.5px;top:744.3px;font-size:11px;color:#4598c8">100.100.100.100</div><svg class="abs" style="left:389.5px;top:759.0px" width="14" height="13" viewBox="0 0 14 13"><path d="M6.3 3.1 H2.3 Q1.4 3.1 1.4 4 V10.3 Q1.4 11.1 2.3 11.1 H9.6 Q10.4 11.1 10.4 10.3 V6.3" fill="none" stroke="#6a6a6a" stroke-width="1.25"/><path d="M5.8 7.4 L11.6 1.6" fill="none" stroke="#6a6a6a" stroke-width="1.2"/><path d="M9 0.7 L12.5 0.5 L12.3 4Z" fill="#6a6a6a"/></svg><svg class="abs" style="left:0;top:0;overflow:visible" width="1" height="1"><path d="M431.8 757.8 L436.6 762.7 L447.2 753.4" fill="none" stroke="#7d8f3f" stroke-width="5" stroke-linejoin="round" stroke-linecap="round"/><path d="M431.8 757.8 L436.6 762.7 L447.2 753.4" fill="none" stroke="#a3bc4a" stroke-width="3.6" stroke-linejoin="round" stroke-linecap="round"/></svg>

<!-- right content -->
<div class="t" style="left:475px;top:7.9px;font-size:29.5px;font-weight:bold;color:#2b313b;transform:scaleX(0.8816);transform-origin:0 0">CHECK DNS PROPAGATION</div>
<div class="t" style="left:474px;top:54.7px;font-size:14.65px;letter-spacing:0.019px;color:#3a3a3a">Whether you have recently changed your DNS records, switched web host, or started a new website - checking</div>
<div class="t" style="left:474px;top:79.5px;font-size:14.65px;letter-spacing:-0.026px;color:#3a3a3a">whether the DNS records are propagated globally is essential. DNS Checker provides a free DNS propagation check</div>
<div class="t" style="left:474px;top:104.5px;font-size:14.65px;letter-spacing:0.016px;color:#3a3a3a">service to check Domain Name System records against a selected list of DNS servers in multiple regions worldwide.</div>
<div class="t" style="left:474px;top:129.3px;font-size:14.65px;letter-spacing:0.071px;color:#3a3a3a">Perform a quick DNS propagation lookup for any hostname or domain, and check DNS data collected from all</div>
<div class="t" style="left:474px;top:153.9px;font-size:14.65px;letter-spacing:0.011px;color:#3a3a3a">available DNS Servers to confirm that the DNS records are fully propagated.</div>
<div class="abs" style="left:474px;top:192px;width:756px;height:66px;background:#dcdcdc"></div>
<div class="t" style="left:706.8px;top:216.3px;font-size:14.55px;color:#333">Ads keep servers running.</div>
<div class="t" style="left:881.4px;top:216.3px;font-size:14.55px;color:#2a7bbd">Donate instead?</div>
<div class="abs" style="left:474px;top:270px;width:756px;height:480px;background:#fff;border-radius:6px;box-shadow:0 1px 1px rgba(0,0,0,.15)"></div>
<div class="abs" style="left:474px;top:766px;width:756px;height:20px;background:#fff;border-radius:6px"></div>
<div class="t" style="left:547.8px;top:291.2px;font-size:23px;color:#333;-webkit-text-stroke:0.55px #333;transform:scaleX(0.9743);transform-origin:0 0">DNS Propagation Map by DNSChecker.org</div>
<div class="abs" style="left:1168px;top:291px;width:42px;height:32px;border:1px solid #333;border-radius:5px"></div>
<svg class="abs" style="left:1168px;top:291px" width="42" height="32" viewBox="0 0 42 32"><path d="M10.5 11.7H31.5M10.5 15.8H31.5M10.5 20.1H31.5" stroke="#000" stroke-width="2" stroke-linecap="round"/></svg>
<!-- legend -->
<svg class="abs" style="left:660px;top:709px" width="16" height="20" viewBox="0 0 16 20"><path d="M7.5 18.2 C5.5 14.5 2.4 11.5 2.4 7.6 A5.1 5.1 0 0 1 12.6 7.6 C12.6 11.5 9.5 14.5 7.5 18.2Z" fill="#f5a623" stroke="#4a5560" stroke-width="1.1"/><circle cx="7.5" cy="6.8" r="1.2" fill="#fff" stroke="#4a5560" stroke-width="0.6"/></svg>
<div class="t" style="left:677.7px;top:713.8px;font-size:13px;letter-spacing:0.25px;color:#4a4a4a;-webkit-text-stroke:0.25px #4a4a4a">Server Location</div>
<svg class="abs" style="left:790px;top:711px" width="20" height="17" viewBox="0 0 20 17"><path d="M2.2 9.3 L4 8 L8 12.3 L17.5 3 L18.6 4.2 L8 15 Z" fill="#9cbf4a" stroke="#9cbf4a" stroke-width="1" stroke-linejoin="round"/></svg>
<div class="t" style="left:813.2px;top:713.9px;font-size:13px;color:#4a4a4a;-webkit-text-stroke:0.25px #4a4a4a">Resolved</div>
<svg class="abs" style="left:882px;top:712px" width="17" height="16" viewBox="0 0 17 16"><path d="M3 2.5 L14.5 14 M14.5 2.5 L3 14" stroke="#d9383a" stroke-width="2.8"/></svg>
<div class="t" style="left:903.1px;top:713.9px;font-size:13px;color:#4a4a4a;-webkit-text-stroke:0.25px #4a4a4a">Not Resolved</div>

<svg class="abs" style="left:0;top:0" width="1232" height="773" viewBox="0 0 1232 773"><path d="M838.0 532.7 L838.8 536.3 L843.0 537.3 L844.5 538.1 L846.0 536.9 L849.5 536.9 L851.4 535.1 L852.5 531.5 L854.4 528.8 L856.5 527.3 L858.2 525.4 L857.9 523.7 L861.3 523.3 L864.5 522.4 L867.0 520.9 L868.4 521.5 L869.2 522.8 L872.4 526.7 L875.4 528.6 L877.8 534.3 L879.0 532.5 L880.1 529.2 L882.0 530.6 L881.4 529.0 L879.6 527.9 L878.5 526.3 L874.3 522.6 L872.4 518.6 L874.8 518.2 L874.9 520.0 L877.0 521.3 L878.9 522.8 L881.5 524.8 L883.6 526.5 L883.6 529.4 L884.7 531.3 L886.9 533.7 L887.2 536.7 L888.5 537.5 L889.6 537.3 L889.3 535.3 L890.9 533.9 L889.1 529.0 L890.5 530.2 L891.5 528.4 L894.0 528.6 L894.3 530.2 L894.8 531.3 L895.3 533.5 L896.2 536.3 L898.0 537.1 L901.4 536.5 L904.3 538.1 L907.6 536.7 L910.1 537.1 L909.5 539.2 L909.0 542.3 L908.2 544.4 L907.1 547.0 L904.3 547.5 L904.4 549.7 L906.0 552.8 L907.0 553.6 L908.2 550.5 L910.6 556.7 L914.8 564.5 L920.0 572.0 L921.5 579.0 L924.0 578.8 L928.7 576.9 L930.5 576.1 L935.3 574.3 L938.2 572.0 L940.4 570.7 L944.2 568.7 L947.3 562.8 L945.4 560.9 L942.4 559.5 L941.8 556.0 L940.1 558.1 L938.8 559.3 L934.4 559.7 L933.8 556.5 L933.1 558.8 L932.0 556.0 L928.7 550.6 L929.5 549.5 L933.1 551.5 L938.2 555.5 L941.8 554.6 L944.2 557.4 L948.6 557.9 L958.7 558.8 L959.5 560.5 L961.5 562.2 L961.8 563.1 L964.2 565.5 L967.5 564.5 L967.8 568.7 L969.4 574.6 L971.0 578.7 L973.2 583.5 L975.3 586.4 L976.4 585.3 L978.1 582.9 L979.7 578.3 L979.5 573.9 L980.8 573.9 L984.4 570.8 L989.5 567.0 L992.1 564.1 L995.8 563.6 L997.8 563.1 L999.6 566.8 L1001.8 573.3 L1003.2 573.9 L1004.8 572.3 L1007.0 572.8 L1008.4 579.3 L1008.2 583.3 L1008.1 586.5 L1010.0 588.9 L1011.2 590.7 L1012.8 594.5 L1014.2 595.7 L1016.8 597.1 L1017.4 596.8 L1016.0 593.2 L1014.2 589.6 L1012.8 588.3 L1011.1 584.8 L1009.7 581.7 L1010.6 578.5 L1011.5 577.7 L1012.3 579.0 L1015.5 580.9 L1017.9 582.7 L1018.3 585.6 L1021.5 582.7 L1025.3 580.1 L1025.4 577.2 L1023.7 573.5 L1022.7 572.8 L1019.7 569.2 L1021.3 565.6 L1025.1 564.5 L1026.8 566.5 L1027.2 565.0 L1029.7 563.9 L1033.2 563.1 L1037.1 561.2 L1039.3 559.3 L1041.7 556.7 L1043.4 553.2 L1045.3 549.9 L1045.3 547.3 L1043.6 544.9 L1041.0 541.1 L1042.9 538.1 L1046.4 535.5 L1044.5 535.3 L1040.7 535.9 L1038.7 532.3 L1041.5 530.4 L1044.7 528.6 L1044.4 532.5 L1049.1 530.4 L1049.7 533.3 L1050.8 534.9 L1052.7 535.5 L1052.4 540.6 L1056.5 540.0 L1057.1 539.2 L1057.3 536.3 L1055.6 532.9 L1054.0 531.9 L1057.6 528.6 L1059.2 525.4 L1061.2 523.5 L1066.3 522.0 L1071.3 515.2 L1074.5 511.0 L1074.7 504.9 L1065.8 496.5 L1075.5 484.8 L1087.9 484.0 L1089.5 485.6 L1094.9 484.4 L1096.5 480.2 L1101.1 477.5 L1103.4 478.6 L1103.1 483.3 L1109.7 474.4 L1103.4 485.6 L1097.2 490.3 L1096.1 495.7 L1098.0 507.3 L1103.4 500.3 L1106.5 496.5 L1108.9 490.3 L1108.1 484.8 L1114.3 481.7 L1119.7 481.7 L1122.1 477.8 L1133.7 474.0 L1134.5 467.8 L1132.9 465.4 L1133.0 464.1 L1135.4 463.8 L1137.0 462.3 L1135.2 451.1 L1132.3 445.4 L1119.5 444.0 L1115.2 445.4 L1103.8 445.4 L1102.4 441.1 L1095.3 439.7 L1086.8 434.0 L1072.5 431.2 L1064.0 435.4 L1056.9 436.8 L1052.6 428.3 L1045.5 426.9 L1032.7 425.5 L1025.6 422.6 L1028.4 419.8 L1031.3 412.7 L1027.0 407.7 L1019.9 405.5 L1017.8 401.3 L1012.8 402.0 L1008.5 408.4 L998.5 411.2 L990.0 414.1 L989.4 416.9 L988.0 422.6 L979.5 425.4 L978.1 429.7 L973.8 434.0 L969.5 431.1 L968.1 438.2 L965.3 429.7 L959.6 431.1 L956.7 439.7 L958.2 451.0 L952.5 446.8 L947.0 445.4 L945.1 448.1 L937.9 449.9 L928.8 454.5 L926.1 457.2 L923.4 451.7 L919.8 451.7 L919.8 459.0 L914.3 462.6 L910.7 466.2 L908.9 467.1 L906.2 459.9 L910.7 459.0 L916.2 455.4 L914.3 451.7 L907.1 447.2 L900.8 441.8 L896.2 438.6 L889.9 440.0 L882.6 445.4 L876.3 453.6 L870.9 461.7 L865.7 469.0 L861.7 473.0 L860.9 478.9 L861.7 483.6 L864.0 486.3 L867.2 484.2 L869.6 482.3 L871.6 487.2 L873.3 493.8 L875.1 493.8 L877.6 491.8 L878.9 490.1 L879.5 484.8 L882.6 482.3 L880.1 477.9 L880.4 472.3 L885.0 467.4 L888.0 460.8 L893.1 463.0 L890.1 466.7 L887.1 469.9 L886.9 475.3 L888.0 478.9 L892.4 479.5 L897.2 478.6 L900.6 480.5 L897.2 481.7 L892.0 482.0 L890.1 483.3 L890.9 485.7 L891.5 488.6 L890.1 489.2 L887.7 487.8 L886.1 489.8 L886.3 492.9 L884.5 495.1 L882.5 496.5 L879.0 496.2 L875.5 497.8 L872.1 497.0 L870.2 497.6 L868.9 496.2 L869.6 487.8 L869.7 487.2 L865.8 490.7 L866.6 494.3 L866.7 497.8 L863.7 499.2 L860.6 500.5 L859.5 502.8 L858.0 504.6 L855.8 505.4 L855.4 507.3 L853.1 509.1 L850.9 509.3 L850.5 508.6 L849.8 511.2 L847.5 510.7 L845.4 511.7 L846.4 513.1 L849.8 514.5 L851.1 516.8 L851.1 520.4 L850.5 522.8 L847.0 522.8 L844.0 522.6 L840.5 522.2 L838.3 524.1 L839.3 527.7Z M587.8 460.8 L593.5 456.9 L596.6 455.7 L594.2 452.8 L589.8 449.6 L590.8 447.3 L595.8 443.2 L597.6 440.9 L605.6 435.6 L613.2 438.1 L618.7 440.9 L625.8 441.9 L630.8 446.0 L637.9 447.3 L644.4 444.0 L650.9 442.7 L656.1 445.3 L659.0 448.4 L668.1 450.2 L673.6 452.0 L679.9 450.2 L689.9 451.1 L697.1 447.5 L700.7 439.3 L701.4 435.0 L706.6 439.2 L708.6 448.5 L713.8 453.7 L714.8 446.4 L716.9 444.3 L723.1 446.4 L724.2 454.7 L721.1 459.9 L716.9 463.0 L735.0 468.0 L745.0 472.0 L751.4 478.3 L756.0 490.7 L758.3 494.9 L763.1 502.3 L764.6 504.1 L758.3 507.3 L748.9 507.3 L744.1 511.5 L741.8 515.0 L745.7 510.5 L751.2 510.7 L750.4 513.1 L751.2 516.6 L756.0 517.5 L758.3 516.8 L756.0 519.1 L749.3 522.8 L748.1 519.1 L747.3 520.0 L742.2 522.6 L741.3 525.6 L742.5 526.7 L739.4 527.7 L736.2 529.0 L736.2 531.3 L733.9 533.3 L733.1 536.3 L733.9 539.8 L730.7 541.5 L726.8 544.6 L724.6 549.0 L726.0 552.4 L726.6 557.0 L725.2 558.3 L722.5 553.5 L721.2 549.9 L718.9 550.1 L715.4 548.8 L712.3 549.2 L712.3 551.0 L709.4 551.0 L703.4 550.8 L699.5 553.5 L699.6 556.9 L698.7 563.1 L701.4 568.3 L704.1 570.2 L708.6 569.5 L710.2 567.3 L710.5 565.3 L714.1 564.5 L716.0 565.0 L714.9 568.7 L713.8 571.1 L713.4 573.8 L717.3 573.8 L720.5 573.8 L721.7 575.3 L721.2 580.1 L720.9 582.1 L722.0 583.3 L724.4 584.9 L726.9 584.5 L730.9 585.4 L730.2 587.8 L729.6 586.9 L727.1 585.1 L726.0 586.5 L723.9 586.4 L721.7 585.9 L717.8 583.3 L717.6 581.7 L714.9 578.5 L712.6 577.9 L708.6 576.9 L707.4 575.9 L702.8 573.5 L699.9 573.8 L695.4 572.3 L689.7 569.8 L686.2 566.3 L687.0 564.5 L685.1 561.6 L682.6 558.4 L680.2 555.8 L676.3 551.4 L671.9 546.4 L674.7 552.3 L677.9 557.6 L679.6 562.1 L676.3 558.8 L672.8 553.2 L670.3 548.8 L668.2 544.9 L666.2 542.5 L662.7 541.1 L660.8 537.3 L659.7 534.7 L657.7 531.3 L656.7 529.4 L656.6 523.9 L657.4 517.3 L656.2 511.7 L658.9 512.2 L658.6 510.0 L655.8 507.1 L651.8 505.9 L651.0 501.5 L647.4 496.8 L643.2 490.7 L638.4 485.4 L632.6 481.4 L625.8 480.1 L621.1 478.2 L617.1 481.1 L614.0 482.6 L616.3 476.3 L610.0 483.3 L608.4 486.9 L603.7 490.1 L596.6 494.9 L593.5 496.0 L600.6 490.7 L605.3 484.2 L597.4 484.5 L593.5 478.6 L592.2 471.9 L594.2 469.2 L599.0 464.9 L595.8 464.5 L591.1 464.9 L587.8 460.8Z M759.4 513.6 L764.3 507.6 L765.4 503.8 L769.1 509.3 L770.0 513.8 L767.9 515.7 L765.0 515.0 L760.7 513.8Z M658.3 511.7 L655.8 510.3 L650.6 505.9 L651.8 506.4 L656.6 508.8Z M645.5 502.6 L643.2 497.6 L644.7 497.6Z M613.2 487.5 L609.1 489.5 L610.0 486.3Z M718.9 563.8 L720.5 562.4 L724.4 561.7 L726.8 561.9 L730.7 563.9 L733.9 565.3 L735.9 566.6 L730.7 567.2 L730.4 565.8 L725.2 564.1 L722.0 563.9Z M735.6 569.3 L738.1 567.2 L742.7 567.7 L745.2 569.3 L742.5 570.0 L740.2 571.0 L735.6 569.8Z M729.5 569.7 L732.6 570.0 L731.8 570.5Z M747.0 569.5 L749.5 569.8 L748.9 570.3 L747.0 570.3Z M729.6 555.5 L731.5 555.3 L730.6 560.0 L729.3 559.1Z M730.9 585.4 L733.9 582.7 L735.0 581.7 L735.9 581.3 L739.5 579.5 L740.2 581.7 L742.5 580.1 L744.9 582.5 L747.4 582.4 L752.0 582.2 L755.2 582.2 L757.1 585.7 L761.2 588.4 L765.9 589.9 L770.5 591.5 L773.3 596.0 L774.1 599.2 L776.5 601.4 L782.8 603.1 L788.3 603.8 L792.2 605.0 L797.5 608.4 L798.1 610.5 L797.9 611.9 L796.7 614.6 L792.2 619.9 L791.5 622.8 L791.1 627.6 L789.4 631.9 L786.7 636.3 L784.8 636.5 L779.9 638.2 L776.5 642.1 L776.5 644.5 L774.4 648.5 L770.8 652.7 L766.4 658.0 L764.3 658.0 L760.8 657.4 L761.6 658.2 L763.5 660.7 L762.3 664.1 L754.7 665.7 L755.2 667.1 L750.4 670.2 L751.2 673.4 L749.6 678.9 L746.5 680.9 L748.9 684.6 L746.0 688.9 L743.8 694.6 L745.1 696.6 L750.1 702.7 L746.8 706.0 L742.5 704.1 L735.4 696.9 L733.9 685.8 L736.2 678.9 L735.9 673.4 L736.7 667.1 L737.8 661.7 L740.0 654.4 L740.2 648.9 L741.9 637.5 L742.1 628.9 L740.5 627.6 L732.8 621.5 L731.3 618.3 L727.6 611.1 L724.7 606.6 L726.8 603.9 L725.4 602.7 L726.6 597.9 L728.3 596.8 L731.0 593.0 L730.9 588.9 L729.9 587.3Z M756.3 693.5 L761.5 693.8 L760.7 696.1 L756.7 695.6Z M843.8 538.6 L844.6 538.4 L849.0 540.0 L852.0 538.8 L857.7 536.7 L862.5 536.3 L866.4 536.5 L868.6 535.7 L870.3 536.1 L869.6 538.2 L870.0 540.8 L868.9 542.3 L870.3 543.4 L873.8 544.2 L876.8 545.1 L879.0 547.3 L883.0 549.0 L884.5 547.7 L884.5 545.7 L888.5 544.2 L890.9 545.7 L892.7 546.6 L896.4 547.2 L900.2 547.3 L903.9 547.2 L904.3 549.7 L906.3 554.6 L909.0 560.2 L911.0 563.6 L911.7 567.7 L913.7 570.3 L915.3 574.3 L918.0 576.2 L920.4 578.5 L921.1 580.8 L924.0 582.7 L928.7 581.4 L933.9 580.4 L934.1 582.7 L932.7 585.7 L931.1 588.9 L927.9 592.9 L924.5 596.0 L920.8 598.4 L920.0 599.8 L917.7 602.4 L915.6 605.5 L915.0 610.0 L915.3 613.5 L916.9 615.9 L916.9 619.1 L917.2 622.3 L914.8 625.6 L911.4 627.9 L907.9 631.1 L909.0 635.6 L909.0 638.2 L904.4 641.7 L904.7 645.2 L901.9 648.7 L899.5 651.6 L897.0 654.4 L893.4 656.3 L888.5 656.3 L884.5 657.8 L882.0 656.5 L881.4 653.5 L880.1 648.9 L879.0 646.3 L877.0 642.8 L875.9 636.3 L874.1 632.8 L871.6 626.9 L872.1 623.5 L874.1 619.2 L874.8 616.3 L873.8 613.1 L872.4 608.7 L871.6 606.8 L868.8 603.6 L866.7 600.1 L867.8 598.6 L868.1 595.3 L868.3 592.9 L866.4 592.1 L864.0 592.3 L862.5 592.4 L860.9 590.4 L858.4 589.1 L854.6 589.7 L852.7 590.5 L849.8 591.8 L846.7 590.8 L841.2 592.3 L838.0 590.5 L835.9 589.2 L833.3 587.3 L832.2 585.7 L830.1 582.5 L828.4 580.4 L826.6 579.5 L826.5 577.2 L825.4 575.7 L827.0 573.6 L827.7 570.2 L827.3 567.8 L826.2 565.6 L827.0 562.8 L829.3 560.2 L830.1 556.5 L832.5 553.3 L835.6 552.3 L837.5 550.5 L837.8 548.8 L838.3 544.9 L841.0 542.9 L842.3 542.1 L843.2 539.8Z M930.8 618.3 L932.7 624.0 L931.6 626.4 L929.5 632.3 L927.1 639.1 L924.3 641.0 L921.9 637.4 L921.3 633.9 L923.0 631.1 L922.4 626.4 L926.3 624.5 L928.7 621.2Z M844.0 507.7 L847.5 507.1 L851.4 506.1 L853.8 505.9 L855.2 505.0 L854.4 504.1 L855.7 501.3 L853.5 500.5 L853.0 498.9 L850.6 496.0 L849.8 492.6 L848.3 492.1 L849.0 490.7 L849.8 488.6 L847.5 487.5 L848.3 484.5 L845.1 484.5 L844.0 487.8 L844.2 491.2 L843.8 494.0 L845.4 495.4 L847.9 495.1 L847.5 497.0 L848.3 499.2 L845.7 499.4 L846.4 500.8 L844.8 503.3 L847.5 504.3 L846.4 504.9Z M843.5 502.3 L843.4 499.2 L844.5 496.2 L843.2 494.3 L841.3 493.8 L839.6 495.1 L837.2 497.0 L837.5 500.2 L836.6 503.3 L838.8 504.1 L842.9 502.3Z M865.9 528.2 L868.4 527.9 L868.1 531.9 L867.0 532.5 L866.2 532.1Z M867.8 523.9 L868.1 525.8 L867.5 527.3 L866.6 526.3 L866.6 524.8Z M872.5 534.1 L877.6 533.7 L876.8 536.9 L872.7 535.1Z M890.1 539.0 L894.5 539.6 L891.6 540.2Z M903.9 540.0 L907.6 538.8 L906.5 540.4 L904.9 541.0Z M1043.9 557.9 L1045.5 558.4 L1044.7 561.9 L1043.6 563.8 L1042.5 561.9Z M1024.5 568.3 L1027.3 566.8 L1028.1 567.7 L1025.9 570.0Z M979.0 583.7 L981.1 585.7 L982.2 588.1 L980.1 589.9 L978.9 588.1Z M1043.1 569.5 L1045.9 569.7 L1045.8 572.6 L1044.8 573.9 L1048.6 576.9 L1048.9 579.2 L1047.0 578.5 L1045.3 577.1 L1043.3 576.4 L1042.0 573.8 L1042.9 572.6Z M1045.5 588.1 L1047.8 585.6 L1051.0 583.7 L1052.7 587.7 L1050.8 590.4 L1048.6 589.1Z M1045.5 580.4 L1049.4 579.3 L1051.3 581.7 L1050.2 583.3 L1047.2 584.6 L1046.1 583.2Z M1037.9 586.1 L1041.8 582.5 L1041.2 581.7 L1037.6 585.3Z M1003.3 590.4 L1006.8 591.0 L1011.2 595.4 L1016.6 600.0 L1017.9 601.6 L1020.2 604.3 L1019.9 608.4 L1017.9 608.5 L1014.4 605.5 L1011.5 600.8 L1008.7 596.5 L1005.2 593.4Z M1019.0 610.0 L1021.5 608.7 L1023.9 609.2 L1028.1 609.3 L1030.8 610.1 L1033.6 611.4 L1033.5 613.0 L1028.1 612.2 L1023.4 611.5 L1020.2 610.7Z M1034.4 612.2 L1037.3 612.5 L1040.7 612.3 L1046.9 612.2 L1046.3 613.3 L1040.7 613.3 L1036.0 613.3Z M1048.6 615.5 L1050.5 613.5 L1053.8 612.5 L1050.2 614.4Z M1025.0 596.8 L1025.9 595.9 L1028.6 595.1 L1031.3 594.1 L1035.2 591.3 L1037.6 588.1 L1041.0 591.0 L1039.2 592.4 L1038.7 597.6 L1040.4 597.6 L1038.4 599.2 L1036.8 601.6 L1036.5 604.7 L1033.6 605.5 L1029.4 604.3 L1026.5 603.8 L1026.8 601.1 L1025.0 599.2Z M1041.4 607.9 L1042.9 608.0 L1043.7 603.3 L1045.0 606.8 L1046.7 606.5 L1044.7 602.2 L1047.5 600.8 L1043.9 600.6 L1042.6 598.4 L1049.7 597.0 L1050.5 596.8 L1043.6 597.5 L1041.8 599.2 L1040.4 603.6 L1041.5 604.7Z M1054.1 596.0 L1055.7 596.8 L1054.9 599.2 L1056.0 600.5 L1054.3 600.0Z M1054.9 604.3 L1059.3 604.6 L1058.1 605.4 L1055.2 604.9Z M1059.7 601.3 L1062.0 599.8 L1064.7 600.8 L1066.8 604.4 L1070.4 601.6 L1075.4 603.3 L1082.5 606.6 L1083.5 609.8 L1085.7 609.0 L1086.3 612.2 L1090.0 615.7 L1085.4 614.6 L1083.3 612.2 L1080.2 611.2 L1079.2 613.5 L1075.4 613.6 L1072.3 612.0 L1070.7 612.3 L1070.4 607.4 L1066.0 606.0 L1063.1 605.5 L1061.2 603.6 L1063.6 603.1 L1061.2 602.7Z M1087.3 607.9 L1092.0 606.0 L1093.3 607.1 L1089.6 609.0Z M1099.9 609.8 L1104.6 612.3 L1107.8 614.6 L1106.2 615.1 L1100.7 611.9Z M1111.7 631.8 L1116.5 635.3 L1115.5 635.3 L1112.0 632.8Z M1116.1 623.1 L1116.9 623.5 L1118.8 627.3 L1118.0 627.6Z M1132.7 627.3 L1134.6 626.9 L1134.8 628.4 L1133.0 628.4Z M1033.0 634.5 L1032.1 637.4 L1031.9 640.8 L1032.8 643.5 L1033.8 646.7 L1034.6 649.8 L1035.5 652.5 L1034.6 657.1 L1039.0 658.2 L1041.5 657.3 L1045.3 656.1 L1048.6 654.4 L1051.8 653.1 L1056.5 652.0 L1060.5 651.6 L1064.7 654.0 L1067.1 658.0 L1068.3 656.3 L1070.2 654.4 L1070.2 658.6 L1071.5 658.2 L1073.1 661.3 L1074.7 664.1 L1076.2 664.9 L1079.4 665.7 L1081.6 664.3 L1084.0 666.3 L1086.5 663.7 L1089.5 663.1 L1090.0 659.8 L1091.5 656.1 L1092.5 654.2 L1094.2 651.4 L1095.3 646.3 L1094.5 644.2 L1094.7 640.0 L1092.0 638.2 L1090.9 637.0 L1088.4 633.3 L1084.6 630.2 L1083.0 626.3 L1082.2 624.0 L1081.0 621.8 L1079.4 619.1 L1077.8 616.2 L1076.2 619.9 L1076.4 625.6 L1075.1 627.3 L1073.1 627.1 L1069.1 624.8 L1066.8 622.8 L1067.9 620.4 L1069.0 618.8 L1067.6 618.1 L1062.2 617.3 L1059.3 618.9 L1057.3 623.0 L1054.9 623.1 L1053.0 621.3 L1050.2 622.5 L1048.6 625.3 L1045.8 628.1 L1043.9 630.6 L1040.1 631.9 L1037.1 632.4Z M1081.3 669.6 L1087.0 670.0 L1086.8 672.8 L1084.9 675.8 L1082.2 673.4Z M1125.5 657.1 L1128.5 660.2 L1130.5 663.1 L1134.6 663.5 L1133.7 666.3 L1131.9 668.2 L1129.6 671.5 L1128.5 670.9 L1129.4 668.2 L1127.2 666.5 L1128.5 664.1 L1125.9 658.6Z M1125.5 669.2 L1128.0 670.9 L1127.3 673.0 L1125.5 676.2 L1123.1 677.8 L1122.3 680.9 L1119.6 682.5 L1115.7 681.1 L1118.5 676.7 L1122.5 673.4 L1124.5 670.2Z M569.1 448.6 L575.6 453.8 L584.7 461.6 L580.8 466.8 L569.1 464.2Z M569.1 436.2 L573.6 438.2 L569.1 440.8Z M1133.0 438.3 L1135.2 436.8 L1135.2 440.4Z M582.0 468.0 L586.0 469.0 L585.0 471.0 L582.0 470.5Z M753.5 362.7 L768.7 358.5 L772.9 356.0 L778.8 360.2 L778.8 353.5 L785.5 345.1 L793.9 340.9 L809.0 341.7 L819.1 351.8 L815.8 356.9 L804.0 358.5 L814.1 360.2 L817.5 363.6 L820.8 367.0 L829.2 361.9 L832.6 367.0 L830.9 373.7 L824.2 380.4 L821.7 392.2 L822.5 404.0 L819.1 409.0 L820.8 419.1 L820.4 424.1 L815.2 430.4 L817.3 437.6 L816.3 443.8 L808.0 450.0 L799.7 456.2 L789.3 463.5 L785.2 474.9 L782.1 482.1 L773.8 478.0 L768.6 461.4 L767.1 454.2 L769.7 446.9 L766.0 442.8 L768.6 439.7 L765.5 436.6 L764.5 430.4 L762.4 420.0 L758.6 414.0 L743.5 410.7 L740.1 405.6 L745.1 402.3 L738.4 397.2 L736.7 393.0 L748.5 385.5 L745.1 380.4 L751.9 368.6Z M813.7 461.4 L817.3 459.3 L822.5 460.4 L828.7 458.8 L830.7 463.5 L826.6 468.7 L821.4 470.7 L816.3 467.6 L814.2 464.5Z M868.5 383.5 L878.5 379.9 L881.3 376.4 L888.4 374.9 L894.1 378.5 L894.9 383.5 L890.6 386.3 L883.5 387.0 L885.6 390.6 L881.3 394.1 L879.9 402.7 L877.1 406.2 L873.5 401.3 L869.2 389.9Z M884.2 395.6 L887.7 394.1 L890.6 397.7 L886.3 401.3Z M922.6 375.6 L931.1 372.1 L933.3 374.9 L926.9 381.3Z M932.5 435.4 L935.4 425.4 L941.1 416.9 L948.2 410.5 L956.7 405.2 L960.3 406.9 L959.6 410.5 L951.0 416.9 L943.9 424.0 L941.1 431.1 L942.5 440.4 L937.5 442.2Z M995.7 377.1 L1002.1 369.3 L1005.7 372.8 L1009.9 384.2 L1008.5 390.6 L1004.2 391.3 L998.5 385.6Z M1008.5 397.7 L1011.3 387.8 L1016.3 390.6 L1017.8 394.2 L1014.2 397.0Z M1067.6 413.4 L1072.5 410.5 L1078.9 413.4 L1078.9 418.3 L1071.1 419.8Z M1081.1 415.5 L1088.2 416.9 L1087.5 419.8 L1082.5 418.3Z M1071.8 426.9 L1075.4 424.8 L1077.5 428.3Z" fill="#3399d4" stroke="#3399d4" stroke-width="0.6" stroke-linejoin="round"/><path d="M931.0 516.2 L935.5 516.6 L936.0 519.0 L934.8 522.5 L934.2 526.0 L935.8 530.0 L936.5 535.0 L935.0 537.8 L932.0 537.6 L930.0 533.0 L929.0 528.0 L927.0 524.0 L926.8 521.5 L928.5 518.5Z M896.8 522.6 L899.6 519.1 L905.3 518.4 L908.2 519.8 L910.3 517.7 L913.9 521.2 L912.5 524.1 L916.7 526.9 L912.5 529.8 L905.3 528.3 L899.6 526.9 L897.5 524.8Z M723.0 444.7 L731.2 446.2 L736.4 454.5 L735.9 460.7 L729.7 465.4 L741.1 470.0 L751.4 474.2 L751.4 477.3 L745.2 476.2 L742.1 475.2 L733.8 473.1 L729.7 474.2 L728.7 479.3 L730.7 487.6 L729.7 495.9 L727.1 505.2 L724.0 501.1 L722.4 495.9 L714.2 492.8 L705.9 488.7 L703.8 481.4 L705.9 475.2 L714.2 468.0 L717.3 461.7 L721.4 457.6 L723.5 451.4Z" fill="#fff"/><path d="M601 564.4 L601.6 564.8 M603.5 565.8 L606.5 567.2 L608.3 569.6" fill="none" stroke="#3399d4" stroke-width="1.6" stroke-linecap="round"/><circle cx="569.4" cy="625.8" r="0.8" fill="#3399d4"/><path d="M1075.4 498.2 L1076.7 498.2 L1077.5 503.2 L1078.5 509.4 L1079.5 512.1 L1078.0 512.5 L1076.8 511.4 L1077.0 515.6 L1077.6 518.7 L1076.1 519.5 L1074.9 516.8 L1074.5 510.2 L1074.9 504.0Z M1073.7 522.6 L1076.1 521.1 L1078.4 522.6 L1080.7 523.0 L1080.3 524.9 L1077.6 526.1 L1076.1 527.3 L1074.5 526.5 L1073.0 524.9Z M1071.8 526.5 L1073.7 527.3 L1074.9 530.4 L1074.5 533.5 L1073.7 536.6 L1073.0 539.7 L1069.8 541.2 L1066.7 542.8 L1063.6 543.6 L1060.5 544.3 L1059.0 545.9 L1057.4 547.5 L1055.5 547.1 L1055.9 544.3 L1059.0 542.0 L1062.1 540.9 L1065.2 538.9 L1068.3 537.4 L1070.6 535.0 L1071.4 531.9 L1071.0 528.8Z" fill="#3399d4" stroke="#3399d4" stroke-width="1.3" stroke-linejoin="round"/><path d="M708.2 361.4 L717.5 353.7 L723.0 348.2 L728.5 346.6 L737.3 345.5 L747.2 348.2 L753.8 352.6 L754.9 357.0 L751.6 362.5 L747.2 368.0 L742.8 375.7 L738.4 383.4 L734.0 387.8 L733.5 394.4 L729.6 401.0 L728.5 405.4 L726.3 409.8 L719.7 410.9 L712.0 406.5 L713.7 398.8 L707.6 394.4 L703.2 390.0 L700.5 382.3 L701.0 372.4 L704.3 369.1 L707.6 370.2 L706.5 365.8Z M659.1 411.3 L663.6 403.1 L669.5 400.4 L669.9 404.9 L667.2 410.4 L661.8 412.6Z M674.9 392.2 L677.2 390.9 L679.9 393.2 L677.2 394.5Z M673.6 398.6 L677.2 395.9 L679.9 397.7 L678.5 401.3 L675.4 401.8Z M667.2 415.8 L669.9 409.5 L674.5 409.0 L679.0 412.2 L679.0 406.7 L681.7 406.7 L682.6 410.4 L685.8 412.2 L685.3 416.7 L680.8 418.5 L674.5 421.2 L672.6 418.5Z M686.2 388.2 L689.0 387.3 L693.5 391.3 L695.3 397.7 L692.6 398.6 L689.0 394.1 L686.7 393.2Z M697.1 391.3 L699.4 390.4 L701.6 395.0 L704.3 398.6 L703.4 401.8 L700.7 400.4 L698.0 396.8Z M690.8 409.5 L695.3 407.2 L698.0 409.9 L698.9 414.9 L697.1 418.5 L693.5 417.6 L690.8 414.0Z M699.8 416.7 L702.5 414.0 L704.3 415.8 L704.3 419.9 L701.2 419.9Z M699.4 404.9 L702.1 403.6 L706.2 406.7 L708.9 411.3 L713.4 413.1 L720.7 412.6 L726.1 414.9 L726.5 419.4 L722.5 421.2 L715.2 420.3 L708.9 418.5 L705.3 413.1 L700.7 408.6Z M655.4 422.1 L660.0 421.2 L666.3 423.0 L669.9 427.6 L666.3 432.1 L664.5 437.5 L659.1 439.3 L654.1 435.7 L655.4 428.5Z M665.9 427.6 L673.6 430.3 L679.9 427.6 L685.3 426.2 L687.1 427.6 L688.0 433.9 L689.9 438.4 L692.6 441.2 L693.5 445.7 L689.9 449.3 L681.7 451.1 L673.6 450.2 L669.0 447.5 L668.1 443.9 L671.7 443.0 L667.2 439.3 L665.4 435.7Z M690.8 427.6 L694.4 424.0 L698.0 424.9 L700.7 430.3 L698.9 435.7 L697.1 437.5 L693.5 435.7 L691.7 432.1Z M701.2 424.9 L705.3 423.0 L708.9 424.0 L709.3 428.5 L704.3 432.1 L701.6 430.3Z M695.3 445.7 L698.9 443.9 L701.6 446.6 L700.7 450.2 L696.2 449.3Z M710.7 429.3 L715.9 425.2 L721.1 426.2 L725.7 425.2 L731.9 429.3 L734.5 434.0 L741.8 439.2 L746.4 445.4 L747.5 449.5 L752.1 453.7 L754.7 458.8 L751.1 464.0 L746.4 460.9 L748.0 466.1 L750.6 471.3 L746.9 474.4 L741.8 470.2 L735.5 467.1 L729.3 467.1 L727.8 464.5 L733.5 463.0 L737.1 459.9 L737.1 453.7 L731.4 445.4 L725.2 444.3 L720.0 445.4 L715.9 444.3 L710.7 439.2Z M715.7 462.3 L721.4 464.8 L726.6 470.0 L723.5 471.0 L716.2 469.0Z" fill="#3399d4" stroke="#3399d4" stroke-width="0.6" stroke-linejoin="round"/><path d="M630.5 444.1 L630.5 479.2 L633.7 480.1 L636.1 483.3 L639.2 480.8 L642.4 484.8 L646.3 492.1 L647.9 494.0 M658.6 510.3 L702.8 510.3 L702.8 509.3 L703.7 511.0 L709.4 512.2 L711.8 512.6 L713.5 511.9 L719.2 515.2 L720.3 516.1 L723.0 518.9 L722.8 523.9 L721.9 526.1 L725.2 525.4 L728.0 523.3 L732.3 521.7 L735.1 519.5 L740.2 519.5 L741.4 518.6 L742.5 515.7 L743.8 514.1 L745.4 514.3 L746.0 515.0 L746.0 518.0 L747.3 519.7 M668.2 544.9 L672.0 544.6 L677.9 547.2 L682.3 547.2 L682.3 546.2 L685.0 546.2 L688.1 550.3 L690.3 551.4 L691.4 549.9 L693.6 549.9 L696.0 554.0 L699.6 556.9 M707.5 576.1 L707.5 574.8 L708.8 573.6 L710.4 573.6 L710.4 570.7 L712.4 570.7 L713.7 569.5 M713.8 574.1 L712.3 575.9 L711.6 576.6 L710.8 577.4 M721.7 575.3 L718.9 576.4 L716.4 577.2 L715.3 578.7 M721.1 581.9 L717.8 581.6 M722.7 584.1 L722.2 586.4 M730.9 585.6 L730.1 587.8 M740.5 580.4 L738.6 581.7 L738.8 585.9 L740.2 588.1 L746.5 589.4 L746.0 592.1 L746.8 595.7 L747.4 597.3 M758.3 585.7 L756.7 588.3 L757.2 591.0 M762.9 589.7 L761.5 596.8 M767.8 590.2 L767.0 595.6 M747.4 597.3 L752.0 595.3 L755.2 592.6 L757.2 591.0 L758.6 596.8 L763.8 596.2 L767.0 595.6 L771.6 592.6 M728.3 596.8 L731.5 598.6 L734.2 599.4 L737.0 601.3 L741.8 605.2 L742.7 605.8 L743.5 600.9 L742.5 596.8 L746.8 595.7 M726.3 604.6 L728.3 607.1 L731.5 603.9 L734.2 599.4 M742.7 605.8 L738.0 607.3 L737.0 610.7 L739.1 615.1 L741.6 616.7 L743.2 616.7 L744.6 619.1 L743.3 624.0 L744.1 625.6 L743.3 627.3 L741.9 628.6 M743.2 616.7 L748.9 614.7 L750.0 617.5 L755.2 620.7 L757.5 621.2 L758.0 625.3 L761.2 625.3 L762.3 628.4 L761.2 631.1 M743.3 627.3 L744.9 630.6 L745.4 633.9 L747.0 636.2 L744.9 640.0 L744.9 645.2 L742.9 649.8 L742.5 654.4 L741.8 660.2 L741.0 667.1 L739.7 672.3 L740.2 678.9 L738.6 685.8 L737.3 691.8 L739.4 695.1 L744.1 696.1 L744.8 703.3 M747.0 636.2 L751.2 635.1 L754.2 635.1 L756.7 637.5 L761.5 640.8 L766.8 641.0 M754.2 635.1 L755.6 630.7 L761.2 631.1 L761.5 634.8 L765.0 635.3 L766.8 638.2 L766.8 641.0 L768.1 643.6 L762.1 649.2 L764.8 650.5 L768.7 655.7 M762.1 649.2 L761.2 655.4 L760.8 656.7 M838.9 526.3 L842.6 526.3 L842.1 529.8 L841.5 531.3 L841.9 533.9 L841.2 535.9 M850.1 523.0 L854.1 524.3 L858.0 525.2 M856.9 505.1 L859.6 508.1 L862.1 509.1 L865.9 510.3 L865.0 513.6 L863.9 513.8 L862.5 516.6 L864.0 517.5 L863.4 519.3 L864.0 521.3 L864.8 522.2 M864.3 499.7 L862.6 503.3 L862.5 505.9 L863.1 507.1 L862.1 509.1 M866.6 495.1 L868.6 495.4 M875.4 497.8 L876.0 501.3 L876.7 505.1 L872.1 507.1 L874.8 510.7 L873.5 513.8 L869.1 514.3 L868.1 513.8 L865.0 513.6 M869.4 515.2 L867.2 517.5 L864.0 517.5 M869.4 515.2 L872.2 515.0 L874.6 516.1 L874.6 518.2 M883.6 496.5 L889.0 496.5 L890.1 497.8 L890.7 501.0 L889.6 502.3 L891.0 505.9 L888.6 510.0 M876.7 505.1 L879.0 506.8 L882.6 509.1 L885.3 509.3 L888.6 510.0 M874.8 510.7 L876.7 510.3 L879.6 511.2 L880.1 512.6 L882.6 513.1 L885.3 511.5 L887.9 511.7 M879.6 511.2 L879.0 513.8 L878.4 515.7 L874.6 516.1 M887.9 511.7 L886.1 516.6 L884.9 517.0 L882.6 517.5 L879.2 516.1 L878.4 515.7 M890.7 503.8 L893.2 503.1 L901.1 504.3 L906.3 502.0 L908.8 506.4 L912.9 508.1 L916.1 508.8 L915.6 513.1 L913.3 514.7 M887.9 511.7 L892.3 513.4 L895.0 511.9 L897.5 512.2 L899.1 514.1 L900.5 516.4 L898.6 518.9 M890.1 497.8 L893.7 497.0 L895.0 492.9 L897.5 491.8 L901.7 493.2 L903.2 500.2 L901.1 504.3 M886.3 491.8 L895.0 492.9 M891.3 486.9 L896.1 487.8 L897.2 481.7 M897.5 491.8 L896.1 487.8 M897.2 478.6 L902.7 470.9 L899.5 464.9 L900.3 452.4 L898.0 449.0 L898.7 443.7 M891.0 460.0 L890.4 453.2 L886.1 445.9 L893.5 446.8 L898.0 443.2 M872.2 483.3 L872.5 476.3 L871.9 468.5 L875.9 461.9 L879.0 451.6 L882.2 448.6 L886.1 445.9 M888.8 520.4 L889.1 522.2 L893.2 522.4 L898.1 522.4 M889.1 527.5 L894.2 527.1 L897.2 526.1 M884.5 530.8 L886.0 528.4 L889.1 527.5 M882.6 517.5 L883.6 519.7 L883.3 522.8 L882.2 525.0 M884.9 517.0 L888.8 520.4 M910.9 536.7 L912.9 536.7 L919.9 536.1 L923.7 535.9 L923.7 530.8 L921.6 527.9 L918.5 527.1 M919.9 536.1 L918.0 541.3 L914.5 545.3 L911.2 550.6 M914.5 545.3 L923.5 551.0 L926.3 551.2 L928.7 550.5 M928.7 549.5 L928.1 544.9 L925.6 543.0 L924.8 539.2 L923.7 535.9 M920.8 572.5 L926.3 571.6 L935.0 568.7 L940.9 563.6 L940.1 559.7 M909.8 544.9 L914.5 545.3 M938.0 535.7 L942.9 533.9 L949.5 537.1 L948.6 543.0 L949.1 549.9 L950.5 552.4 L952.7 554.6 L951.6 558.1 M949.1 549.9 L957.7 549.7 L962.3 546.0 L964.5 542.3 L965.3 537.9 L970.5 535.9 M949.5 537.1 L955.5 535.7 L960.0 535.9 L963.4 534.3 L965.9 536.9 L970.5 535.9 M960.6 560.7 L965.0 559.5 L964.1 553.2 L968.0 549.2 L970.7 547.5 L970.1 544.6 L972.1 541.1 L975.7 539.2 M975.7 539.2 L977.3 542.1 L977.6 547.2 L979.7 549.2 L979.4 551.7 L984.7 554.0 L992.1 555.8 L992.0 553.3 L987.1 552.1 L980.9 549.2 M993.1 554.4 L998.1 553.5 L1002.1 551.0 L1006.5 552.8 L1007.1 560.3 L1010.0 563.3 L1012.6 564.3 L1014.2 562.9 L1016.4 562.2 L1019.9 562.1 L1023.4 564.3 M1006.5 552.8 L1002.9 556.7 L1001.8 560.5 L1000.2 563.6 L999.1 564.5 M992.0 563.3 L993.1 559.7 L992.1 557.6 L998.1 558.1 L998.9 559.8 L998.6 564.5 M1010.0 563.3 L1010.8 566.1 L1007.9 570.0 L1008.4 573.6 L1009.0 578.2 L1009.5 582.5 M1010.9 566.3 L1012.8 570.7 L1017.9 571.1 L1019.4 575.3 L1015.5 576.4 L1014.5 579.8 M1014.2 562.9 L1017.1 567.0 L1018.6 569.2 L1021.8 573.6 L1022.7 576.1 L1020.2 581.7 L1017.9 582.7 M1010.9 588.9 L1013.8 590.0 M991.5 509.8 L996.6 516.1 L1004.4 523.9 L1012.3 525.0 L1020.2 526.1 L1028.9 522.6 L1034.4 518.4 L1041.8 515.0 L1042.0 509.1 L1037.1 508.1 L1033.6 507.1 L1023.4 509.5 L1020.2 507.1 L1013.9 504.1 L1007.6 502.8 L995.0 506.1 L991.5 509.8 M1037.1 508.1 L1042.3 501.3 L1050.2 500.0 L1053.4 507.8 L1058.9 512.6 L1062.8 512.6 L1066.0 511.7 L1064.6 517.3 L1060.0 520.0 L1059.2 525.4 M1049.1 530.4 L1052.6 526.9 L1057.3 525.2 L1059.2 525.4 M1049.7 534.3 L1054.1 533.7 L1055.6 533.1 M991.5 509.8 L987.1 515.0 L983.1 519.1 L979.5 519.5 L979.7 525.6 L972.9 529.4 L969.3 531.3 L970.5 535.9 L972.1 536.7 L975.7 539.2 M927.5 516.8 L926.3 511.7 L927.5 507.1 L932.7 504.1 L939.8 505.6 L946.1 505.4 L949.5 500.2 L949.2 497.6 L956.3 496.0 L961.8 494.0 L968.9 497.6 L973.7 497.0 L979.2 504.9 L985.5 505.4 L991.5 509.8 M940.5 519.5 L941.3 527.5 L945.4 524.8 L949.2 520.9 L954.0 522.8 L957.1 524.1 L961.1 529.0 L965.0 525.6 L968.9 523.9 L979.5 525.6 M941.3 527.5 L949.2 527.7 L954.7 532.7 L957.9 535.5 M850.3 540.0 L851.1 544.7 L847.3 546.6 L845.1 549.5 L839.3 551.9 L839.3 553.7 L832.2 553.7 M839.3 554.4 L839.3 556.7 L834.1 556.7 L834.1 561.0 L832.5 564.8 L826.2 564.8 M866.6 536.5 L865.9 541.0 L864.8 543.6 L868.0 549.2 L868.8 551.4 L868.0 556.0 L869.1 558.6 L871.8 561.0 M892.4 546.6 L892.4 563.6 L911.2 563.6 M871.8 561.0 L875.1 562.8 L878.2 561.2 L890.9 567.8 L890.9 567.0 L892.4 567.0 L892.4 563.6 M839.3 554.4 L845.4 558.4 L854.9 565.3 L859.8 568.3 L862.1 568.0 L871.8 561.0 M845.4 558.4 L842.7 558.6 L844.3 573.0 L835.0 574.8 L833.7 575.6 L827.3 573.1 M859.8 568.3 L858.7 574.3 L853.3 575.4 L852.2 575.1 L844.3 582.9 M878.1 566.3 L877.4 572.1 L875.1 578.3 L871.9 578.0 L864.0 578.5 L858.7 580.6 M890.9 567.8 L890.1 574.1 L888.5 578.0 L887.7 582.1 L889.3 585.4 M875.1 578.3 L875.9 580.9 L877.4 587.3 L883.0 584.9 L887.7 582.1 M874.3 583.3 L872.2 588.9 L866.6 591.6 M910.6 576.4 L906.8 584.1 L908.7 590.5 M910.6 576.4 L917.7 576.1 L921.0 579.0 M921.3 580.3 L922.4 584.9 L928.7 586.5 L924.0 591.3 L919.1 593.0 L908.7 590.5 M919.1 593.0 L917.7 601.9 M906.5 600.8 L915.0 606.6 M916.7 615.9 L912.1 617.6 L907.6 617.5 L904.7 623.1 L900.9 624.1 L904.9 628.1 L903.5 635.3 L902.4 635.5 L903.5 641.7 M879.0 646.3 L884.5 646.0 L884.5 639.6 L892.4 641.2 L895.6 637.5 L899.4 635.1 L902.4 635.5 M871.6 626.9 L884.5 627.7 L890.1 627.4 L892.9 627.7 M884.5 639.6 L884.5 634.8 L886.1 634.8 L886.1 628.6 L890.1 627.4 M872.4 608.7 L878.2 608.7 L880.8 611.9 L884.5 610.3 L887.7 616.7 L890.9 616.7 L894.8 618.3 L898.0 619.1 L900.3 612.3 L899.2 606.3 L899.5 601.4 L901.6 596.2 L901.9 593.4 L896.2 591.3 L888.5 592.6 L882.2 593.7 L879.8 596.8 L878.2 602.4 L875.9 606.8 L872.4 608.7 M868.3 595.7 L870.8 595.7 L874.0 595.7 L878.5 595.7 M848.1 591.1 L849.0 586.2 L848.6 581.7 L854.4 581.7 L856.6 580.8 L858.7 580.6 M854.9 589.6 L853.8 581.7 M857.2 589.1 L858.7 580.6 M841.2 592.3 L839.6 587.2 L840.5 583.0 L844.3 582.9 M835.0 579.5 L839.6 581.3 L840.5 583.0 M832.2 585.7 L836.4 586.2 L838.0 587.8 L839.6 587.2 M826.6 579.5 L834.1 579.3 L835.0 579.5 L835.0 574.8 M1032.8 591.9 L1035.2 592.4 L1038.4 592.6 L1039.9 592.3 M1075.4 603.3 L1075.4 613.6 M1049.4 613.8 L1050.4 614.3 M890.1 616.7 L895.6 627.9 L892.9 627.7 M900.3 612.3 L905.1 614.3 L907.6 617.5 M899.5 601.4 L906.5 600.8 M901.9 593.4 L906.5 592.9 L908.7 590.5 M887.7 582.1 L895.6 584.9 L905.1 583.3 L906.8 584.1" fill="none" stroke="#2576ab" stroke-width="0.6" stroke-linejoin="round" opacity="0.6"/><path d="M654.2 505.6 L658.6 509.9 L668.0 500.4" fill="none" stroke="#3f4d24" stroke-width="4.3" stroke-linecap="round" stroke-linejoin="round"/><path d="M654.2 505.6 L658.6 509.9 L668.0 500.4" fill="none" stroke="#abc650" stroke-width="2.7" stroke-linecap="round" stroke-linejoin="round"/><path d="M655.4 530.0 L659.8 534.3 L669.2 524.8" fill="none" stroke="#3f4d24" stroke-width="4.3" stroke-linecap="round" stroke-linejoin="round"/><path d="M655.4 530.0 L659.8 534.3 L669.2 524.8" fill="none" stroke="#abc650" stroke-width="2.7" stroke-linecap="round" stroke-linejoin="round"/><path d="M693.8 529.4 L698.2 533.7 L707.6 524.2" fill="none" stroke="#3f4d24" stroke-width="4.3" stroke-linecap="round" stroke-linejoin="round"/><path d="M693.8 529.4 L698.2 533.7 L707.6 524.2" fill="none" stroke="#abc650" stroke-width="2.7" stroke-linecap="round" stroke-linejoin="round"/><path d="M725.8 527.7 L730.2 532.0 L739.6 522.5" fill="none" stroke="#3f4d24" stroke-width="4.3" stroke-linecap="round" stroke-linejoin="round"/><path d="M725.8 527.7 L730.2 532.0 L739.6 522.5" fill="none" stroke="#abc650" stroke-width="2.7" stroke-linecap="round" stroke-linejoin="round"/><path d="M692.6 563.8 L697.0 568.1 L706.4 558.6" fill="none" stroke="#3f4d24" stroke-width="4.3" stroke-linecap="round" stroke-linejoin="round"/><path d="M692.6 563.8 L697.0 568.1 L706.4 558.6" fill="none" stroke="#abc650" stroke-width="2.7" stroke-linecap="round" stroke-linejoin="round"/><path d="M765.5 642.9 L769.9 647.2 L779.3 637.7" fill="none" stroke="#3f4d24" stroke-width="4.3" stroke-linecap="round" stroke-linejoin="round"/><path d="M765.5 642.9 L769.9 647.2 L779.3 637.7" fill="none" stroke="#abc650" stroke-width="2.7" stroke-linecap="round" stroke-linejoin="round"/><path d="M838.0 494.9 L842.4 499.2 L851.8 489.7" fill="none" stroke="#3f4d24" stroke-width="4.3" stroke-linecap="round" stroke-linejoin="round"/><path d="M838.0 494.9 L842.4 499.2 L851.8 489.7" fill="none" stroke="#abc650" stroke-width="2.7" stroke-linecap="round" stroke-linejoin="round"/><path d="M846.8 498.5 L851.2 502.8 L860.6 493.3" fill="none" stroke="#3f4d24" stroke-width="4.3" stroke-linecap="round" stroke-linejoin="round"/><path d="M846.8 498.5 L851.2 502.8 L860.6 493.3" fill="none" stroke="#abc650" stroke-width="2.7" stroke-linecap="round" stroke-linejoin="round"/><path d="M851.0 504.7 L855.4 509.0 L864.8 499.5" fill="none" stroke="#3f4d24" stroke-width="4.3" stroke-linecap="round" stroke-linejoin="round"/><path d="M851.0 504.7 L855.4 509.0 L864.8 499.5" fill="none" stroke="#abc650" stroke-width="2.7" stroke-linecap="round" stroke-linejoin="round"/><path d="M855.5 496.6 L859.9 500.9 L869.3 491.4" fill="none" stroke="#3f4d24" stroke-width="4.3" stroke-linecap="round" stroke-linejoin="round"/><path d="M855.5 496.6 L859.9 500.9 L869.3 491.4" fill="none" stroke="#abc650" stroke-width="2.7" stroke-linecap="round" stroke-linejoin="round"/><path d="M857.6 501.8 L862.0 506.1 L871.4 496.6" fill="none" stroke="#3f4d24" stroke-width="4.3" stroke-linecap="round" stroke-linejoin="round"/><path d="M857.6 501.8 L862.0 506.1 L871.4 496.6" fill="none" stroke="#abc650" stroke-width="2.7" stroke-linecap="round" stroke-linejoin="round"/><path d="M862.9 509.4 L867.3 513.7 L876.7 504.2" fill="none" stroke="#3f4d24" stroke-width="4.3" stroke-linecap="round" stroke-linejoin="round"/><path d="M862.9 509.4 L867.3 513.7 L876.7 504.2" fill="none" stroke="#abc650" stroke-width="2.7" stroke-linecap="round" stroke-linejoin="round"/><path d="M841.9 524.1 L846.3 528.4 L855.7 518.9" fill="none" stroke="#3f4d24" stroke-width="4.3" stroke-linecap="round" stroke-linejoin="round"/><path d="M841.9 524.1 L846.3 528.4 L855.7 518.9" fill="none" stroke="#abc650" stroke-width="2.7" stroke-linecap="round" stroke-linejoin="round"/><path d="M893.4 635.9 L897.8 640.2 L907.2 630.7" fill="none" stroke="#3f4d24" stroke-width="4.3" stroke-linecap="round" stroke-linejoin="round"/><path d="M893.4 635.9 L897.8 640.2 L907.2 630.7" fill="none" stroke="#abc650" stroke-width="2.7" stroke-linecap="round" stroke-linejoin="round"/><path d="M943.1 484.3 L947.5 488.6 L956.9 479.1" fill="none" stroke="#3f4d24" stroke-width="4.3" stroke-linecap="round" stroke-linejoin="round"/><path d="M943.1 484.3 L947.5 488.6 L956.9 479.1" fill="none" stroke="#abc650" stroke-width="2.7" stroke-linecap="round" stroke-linejoin="round"/><path d="M963.5 536.8 L967.9 541.1 L977.3 531.6" fill="none" stroke="#3f4d24" stroke-width="4.3" stroke-linecap="round" stroke-linejoin="round"/><path d="M963.5 536.8 L967.9 541.1 L977.3 531.6" fill="none" stroke="#abc650" stroke-width="2.7" stroke-linecap="round" stroke-linejoin="round"/><path d="M972.2 566.2 L976.6 570.5 L986.0 561.0" fill="none" stroke="#3f4d24" stroke-width="4.3" stroke-linecap="round" stroke-linejoin="round"/><path d="M972.2 566.2 L976.6 570.5 L986.0 561.0" fill="none" stroke="#abc650" stroke-width="2.7" stroke-linecap="round" stroke-linejoin="round"/><path d="M1026.6 557.2 L1031.0 561.5 L1040.4 552.0" fill="none" stroke="#3f4d24" stroke-width="4.3" stroke-linecap="round" stroke-linejoin="round"/><path d="M1026.6 557.2 L1031.0 561.5 L1040.4 552.0" fill="none" stroke="#abc650" stroke-width="2.7" stroke-linecap="round" stroke-linejoin="round"/><path d="M1047.9 530.0 L1052.3 534.3 L1061.7 524.8" fill="none" stroke="#3f4d24" stroke-width="4.3" stroke-linecap="round" stroke-linejoin="round"/><path d="M1047.9 530.0 L1052.3 534.3 L1061.7 524.8" fill="none" stroke="#abc650" stroke-width="2.7" stroke-linecap="round" stroke-linejoin="round"/><path d="M1007.1 587.2 L1011.5 591.5 L1020.9 582.0" fill="none" stroke="#3f4d24" stroke-width="4.3" stroke-linecap="round" stroke-linejoin="round"/><path d="M1007.1 587.2 L1011.5 591.5 L1020.9 582.0" fill="none" stroke="#abc650" stroke-width="2.7" stroke-linecap="round" stroke-linejoin="round"/><path d="M1009.1 589.5 L1013.5 593.8 L1022.9 584.3" fill="none" stroke="#3f4d24" stroke-width="4.3" stroke-linecap="round" stroke-linejoin="round"/><path d="M1009.1 589.5 L1013.5 593.8 L1022.9 584.3" fill="none" stroke="#abc650" stroke-width="2.7" stroke-linecap="round" stroke-linejoin="round"/><path d="M1011.1 591.7 L1015.5 596.0 L1024.9 586.5" fill="none" stroke="#3f4d24" stroke-width="4.3" stroke-linecap="round" stroke-linejoin="round"/><path d="M1011.1 591.7 L1015.5 596.0 L1024.9 586.5" fill="none" stroke="#abc650" stroke-width="2.7" stroke-linecap="round" stroke-linejoin="round"/><path d="M1075.4 658.5 L1079.8 662.8 L1089.2 653.3" fill="none" stroke="#3f4d24" stroke-width="4.3" stroke-linecap="round" stroke-linejoin="round"/><path d="M1075.4 658.5 L1079.8 662.8 L1089.2 653.3" fill="none" stroke="#abc650" stroke-width="2.7" stroke-linecap="round" stroke-linejoin="round"/><path d="M1085.4 650.7 L1089.8 655.0 L1099.2 645.5" fill="none" stroke="#3f4d24" stroke-width="4.3" stroke-linecap="round" stroke-linejoin="round"/><path d="M1085.4 650.7 L1089.8 655.0 L1099.2 645.5" fill="none" stroke="#abc650" stroke-width="2.7" stroke-linecap="round" stroke-linejoin="round"/><path d="M1122.4 656.4 L1126.8 660.7 L1136.2 651.2" fill="none" stroke="#3f4d24" stroke-width="4.3" stroke-linecap="round" stroke-linejoin="round"/><path d="M1122.4 656.4 L1126.8 660.7 L1136.2 651.2" fill="none" stroke="#abc650" stroke-width="2.7" stroke-linecap="round" stroke-linejoin="round"/><path d="M986.1 546.7 L996.1 556.7 M996.1 546.7 L986.1 556.7" stroke="#4a2a2a" stroke-width="4.4" stroke-linecap="round"/><path d="M986.1 546.7 L996.1 556.7 M996.1 546.7 L986.1 556.7" stroke="#d9454a" stroke-width="2.9" stroke-linecap="round"/></svg>
</body></html>
